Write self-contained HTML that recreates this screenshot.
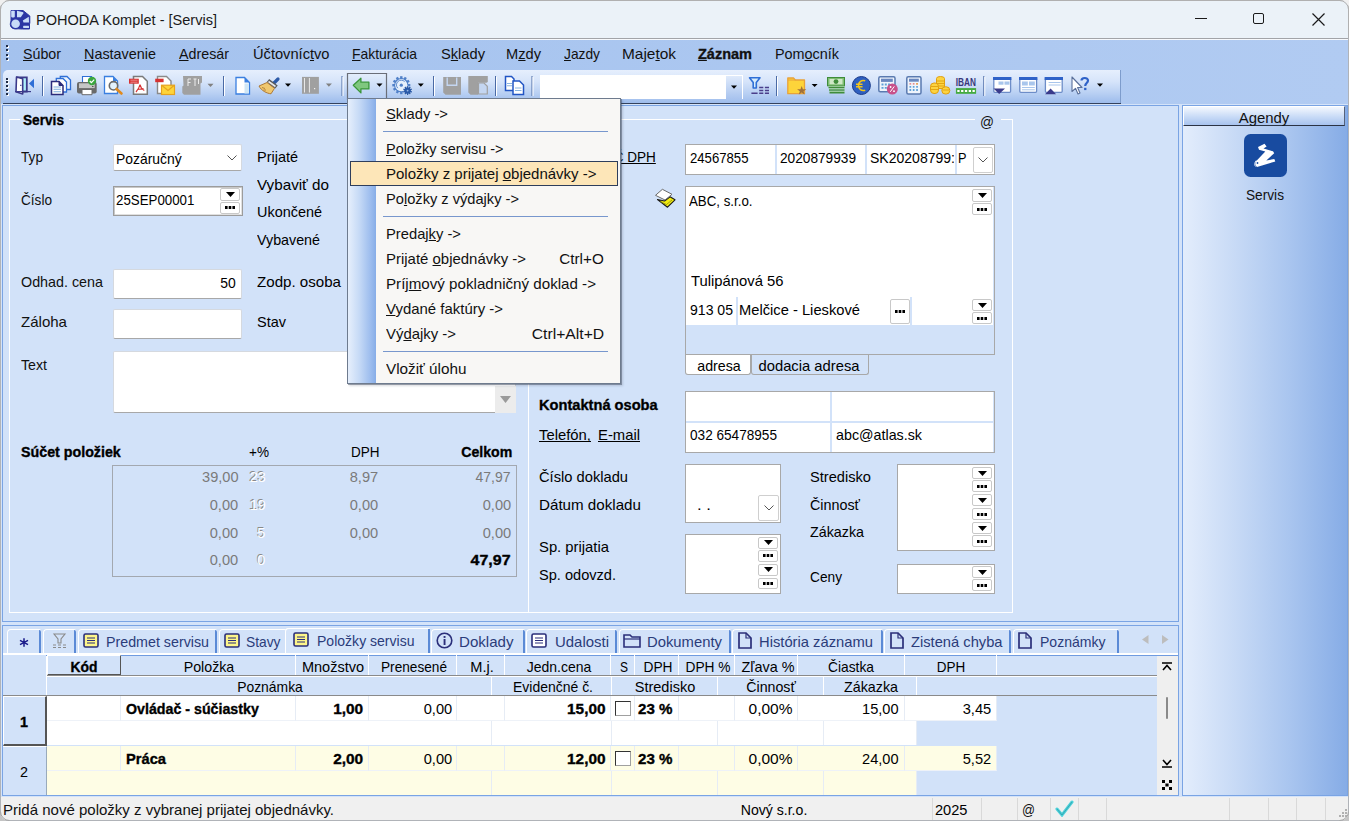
<!DOCTYPE html>
<html><head><meta charset="utf-8"><title>POHODA Komplet - [Servis]</title>
<style>
html,body{margin:0;padding:0;}
body{width:1349px;height:821px;position:relative;overflow:hidden;font-family:"Liberation Sans", sans-serif;background:#b4ccf1;}
svg{display:block;}
u{text-decoration:underline;text-decoration-thickness:1px;text-underline-offset:0.5px;text-decoration-skip-ink:none;}
#t1{transform:scaleX(0.9694);transform-origin:left center;}
#t2{transform:scaleX(0.9489);transform-origin:left center;}
#t3{transform:scaleX(0.9592);transform-origin:left center;}
#t4{transform:scaleX(0.9515);transform-origin:left center;}
#t5{transform:scaleX(0.9761);transform-origin:left center;}
#t6{transform:scaleX(0.9280);transform-origin:left center;}
#t7{transform:scaleX(0.9768);transform-origin:left center;}
#t8{transform:scaleX(0.9765);transform-origin:left center;}
#t9{transform:scaleX(0.9187);transform-origin:left center;}
#t10{transform:scaleX(1.0280);transform-origin:left center;}
#t11{transform:scaleX(0.9595);transform-origin:left center;}
#t12{transform:scaleX(0.9667);transform-origin:left center;}
#t13{transform:translateX(-50%) scaleX(0.9926);transform-origin:center center;}
#t14{transform:translateX(-50%) scaleX(0.9115);transform-origin:center center;}
#t15{transform:scaleX(0.9102);transform-origin:left center;}
#t16{transform:scaleX(0.9190);transform-origin:left center;}
#t17{transform:scaleX(0.9096);transform-origin:left center;}
#t18{transform:scaleX(0.9068);transform-origin:left center;}
#t19{transform:scaleX(0.9545);transform-origin:left center;}
#t20{transform:scaleX(1.0027);transform-origin:left center;}
#t21{transform:scaleX(0.9449);transform-origin:left center;}
#t22{transform:scaleX(0.9256);transform-origin:left center;}
#t23{transform:scaleX(0.8867);transform-origin:left center;}
#t24{transform:scaleX(0.9288);transform-origin:right center;}
#t25{transform:scaleX(0.9640);transform-origin:left center;}
#t26{transform:scaleX(1.0148);transform-origin:left center;}
#t27{transform:scaleX(0.9623);transform-origin:left center;}
#t28{transform:scaleX(0.9521);transform-origin:left center;}
#t29{transform:scaleX(1.0071);transform-origin:left center;}
#t30{transform:scaleX(0.9662);transform-origin:left center;}
#t31{transform:scaleX(0.9502);transform-origin:left center;}
#t32{transform:scaleX(0.9046);transform-origin:left center;}
#t33{transform:scaleX(0.8999);transform-origin:left center;}
#t34{transform:scaleX(0.9412);transform-origin:right center;}
#t35{transform:scaleX(0.9721);transform-origin:right center;}
#t36{transform:scaleX(0.9588);transform-origin:right center;}
#t37{transform:scaleX(0.9759);transform-origin:right center;}
#t38{transform:scaleX(0.9322);transform-origin:right center;}
#t39{transform:scaleX(0.9759);transform-origin:right center;}
#t40{transform:scaleX(0.9588);transform-origin:right center;}
#t41{transform:scaleX(0.9759);transform-origin:right center;}
#t42{transform:scaleX(0.9759);transform-origin:right center;}
#t43{transform:scaleX(0.9759);transform-origin:right center;}
#t44{transform:scaleX(0.9588);transform-origin:right center;}
#t45{transform:scaleX(0.9759);transform-origin:right center;}
#t46{transform:scaleX(0.9759);transform-origin:right center;}
#t47{transform:scaleX(0.9759);transform-origin:right center;}
#t48{transform:scaleX(0.9588);transform-origin:right center;}
#t49{transform:scaleX(1.0653);transform-origin:right center;}
#t50{transform:scaleX(0.9028);transform-origin:right center;}
#t51{transform:scaleX(0.8764);transform-origin:left center;}
#t52{transform:scaleX(0.9109);transform-origin:left center;}
#t53{transform:scaleX(0.9349);transform-origin:left center;}
#t54{transform:scaleX(0.8487);transform-origin:left center;}
#t55{transform:scaleX(0.8856);transform-origin:left center;}
#t56{transform:scaleX(0.9873);transform-origin:left center;}
#t57{transform:scaleX(0.9370);transform-origin:left center;}
#t58{transform:scaleX(0.9806);transform-origin:left center;}
#t59{transform:translateX(-50%) scaleX(0.9482);transform-origin:center center;}
#t60{transform:translateX(-50%) scaleX(0.9846);transform-origin:center center;}
#t61{transform:scaleX(0.9754);transform-origin:left center;}
#t62{transform:scaleX(0.9896);transform-origin:left center;}
#t63{transform:scaleX(0.9879);transform-origin:left center;}
#t64{transform:scaleX(0.9068);transform-origin:left center;}
#t65{transform:scaleX(0.9527);transform-origin:left center;}
#t66{transform:scaleX(0.9792);transform-origin:left center;}
#t67{transform:scaleX(1.0108);transform-origin:left center;}
#t68{transform:scaleX(0.9877);transform-origin:left center;}
#t69{transform:scaleX(0.9720);transform-origin:left center;}
#t70{transform:scaleX(1.1186);transform-origin:left center;}
#t71{transform:scaleX(0.9755);transform-origin:left center;}
#t72{transform:scaleX(0.9555);transform-origin:left center;}
#t73{transform:scaleX(0.9523);transform-origin:left center;}
#t74{transform:scaleX(0.9135);transform-origin:left center;}
#t75{transform:scaleX(0.9504);transform-origin:left center;}
#t76{transform:scaleX(0.9196);transform-origin:left center;}
#t77{transform:scaleX(0.9357);transform-origin:left center;}
#t78{transform:scaleX(1.0055);transform-origin:left center;}
#t79{transform:scaleX(0.9963);transform-origin:left center;}
#t80{transform:scaleX(0.9885);transform-origin:left center;}
#t81{transform:scaleX(0.9837);transform-origin:left center;}
#t82{transform:scaleX(0.9798);transform-origin:left center;}
#t83{transform:scaleX(0.9353);transform-origin:left center;}
#t84{transform:translateX(-50%) scaleX(0.9255);transform-origin:center center;}
#t85{transform:translateX(-50%) scaleX(0.9461);transform-origin:center center;}
#t86{transform:translateX(-50%) scaleX(0.9688);transform-origin:center center;}
#t87{transform:translateX(-50%) scaleX(0.9096);transform-origin:center center;}
#t88{transform:translateX(-50%) scaleX(0.9722);transform-origin:center center;}
#t89{transform:translateX(-50%) scaleX(0.9316);transform-origin:center center;}
#t90{transform:translateX(-50%) scaleX(0.7988);transform-origin:center center;}
#t91{transform:translateX(-50%) scaleX(0.9156);transform-origin:center center;}
#t92{transform:translateX(-50%) scaleX(0.9149);transform-origin:center center;}
#t93{transform:translateX(-50%) scaleX(0.9595);transform-origin:center center;}
#t94{transform:translateX(-50%) scaleX(0.9194);transform-origin:center center;}
#t95{transform:translateX(-50%) scaleX(0.8999);transform-origin:center center;}
#t96{transform:translateX(-50%) scaleX(0.9256);transform-origin:center center;}
#t97{transform:translateX(-50%) scaleX(0.9314);transform-origin:center center;}
#t98{transform:translateX(-50%) scaleX(0.9675);transform-origin:center center;}
#t99{transform:translateX(-50%) scaleX(0.9460);transform-origin:center center;}
#t100{transform:translateX(-50%) scaleX(0.9523);transform-origin:center center;}
#t101{transform:scaleX(0.9480);transform-origin:left center;}
#t102{transform:scaleX(1.0273);transform-origin:right center;}
#t103{transform:scaleX(0.9759);transform-origin:right center;}
#t104{transform:scaleX(1.0254);transform-origin:right center;}
#t105{transform:scaleX(1.0087);transform-origin:left center;}
#t106{transform:scaleX(1.0342);transform-origin:right center;}
#t107{transform:scaleX(0.9721);transform-origin:right center;}
#t108{transform:scaleX(0.9759);transform-origin:right center;}
#t109{transform:scaleX(0.9786);transform-origin:left center;}
#t110{transform:scaleX(1.0273);transform-origin:right center;}
#t111{transform:scaleX(0.9759);transform-origin:right center;}
#t112{transform:scaleX(1.0254);transform-origin:right center;}
#t113{transform:scaleX(1.0087);transform-origin:left center;}
#t114{transform:scaleX(1.0342);transform-origin:right center;}
#t115{transform:scaleX(0.9721);transform-origin:right center;}
#t116{transform:scaleX(0.9759);transform-origin:right center;}
#t117{transform:translateX(-50%) scaleX(0.9588);transform-origin:center center;}
#t118{transform:translateX(-50%) scaleX(0.9588);transform-origin:center center;}
#t119{transform:scaleX(1.0008);transform-origin:left center;}
#t120{transform:translateX(-50%) scaleX(0.9399);transform-origin:center center;}
#t121{transform:scaleX(0.9738);transform-origin:left center;}
#t122{transform:scaleX(0.8533);transform-origin:left center;}
#t123{transform:scaleX(0.9846);transform-origin:left center;}
#t124{transform:scaleX(0.9620);transform-origin:left center;}
#t125{transform:scaleX(0.9999);transform-origin:left center;}
#t126{transform:scaleX(0.9756);transform-origin:left center;}
#t127{transform:scaleX(0.9830);transform-origin:left center;}
#t128{transform:scaleX(0.9964);transform-origin:left center;}
#t129{transform:scaleX(1.0095);transform-origin:left center;}
#t130{transform:scaleX(0.9963);transform-origin:left center;}
#t131{transform:scaleX(0.9933);transform-origin:left center;}
#t132{transform:scaleX(1.0188);transform-origin:left center;}
#t133{transform:scaleX(1.0168);transform-origin:right center;}
#t134{transform:scaleX(1.0479);transform-origin:right center;}
</style></head><body>
<div style="position:absolute;left:0px;top:0px;width:1349px;height:38px;background:#ebf2f8;"></div>
<div style="position:absolute;left:0px;top:0px;width:1349px;height:1px;background:#b0b0b0;"></div>
<div style="position:absolute;left:0px;top:0px;width:1px;height:40px;background:#b0b0b0;"></div>
<div style="position:absolute;left:1348px;top:0px;width:1px;height:40px;background:#b0b0b0;"></div>
<svg style="position:absolute;left:0;top:0" width="10" height="10" viewBox="0 0 10 10"><path d="M0 0H9A9 9 0 0 0 0 9Z" fill="#f0f0f0"/><path d="M0.5 9.5A9 9 0 0 1 9.5 0.5" stroke="#b0b0b0" stroke-width="1" fill="none"/></svg>
<svg style="position:absolute;left:1339px;top:0" width="10" height="10" viewBox="0 0 10 10"><path d="M10 0H1A9 9 0 0 1 10 9Z" fill="#f0f0f0"/><path d="M0.5 0.5A9 9 0 0 1 9.5 9.5" stroke="#b0b0b0" stroke-width="1" fill="none"/></svg>
<div style="position:absolute;left:0px;top:38px;width:1349px;height:1px;background:#a2a4a8;"></div>
<div style="position:absolute;left:0px;top:39px;width:1349px;height:1px;background:#f7f9fc;"></div>
<div id="t1" style="position:absolute;left:36.0px;top:11px;font-size:15px;line-height:17px;-webkit-text-stroke:0px #1a1a1a;color:#1a1a1a;white-space:nowrap;">POHODA Komplet - [Servis]</div>
<svg style="position:absolute;left:0;top:0" width="40" height="38" viewBox="0 0 40 38"><path d="M11 10.5H23L29.8 16V23.5H29.5V29H22.5L18 28.8C16 29.2 13 29 11.5 27.5C10 26 10 23 11 21Z" fill="#2a36a4" stroke="#2a36a4" stroke-width="1" stroke-linejoin="round"/><rect x="11.2" y="10.8" width="3.6" height="6.6" rx="0.8" fill="#c8dcf8"/><path d="M17 10.8L23.3 12.2L23.3 13.5L20.8 17.3H17Z" fill="#c8dcf8"/><path d="M28.8 16.8L29 22.6H23.5L22.8 20.5Z" fill="#c8dcf8"/><circle cx="15.6" cy="23.8" r="4.3" fill="#c8dcf8"/><rect x="23.2" y="25.8" width="5.8" height="2.3" rx="0.5" fill="#c8dcf8"/></svg>
<div style="position:absolute;left:1195px;top:18px;width:12px;height:1px;background:#1a1a1a;"></div>
<div style="position:absolute;left:1253px;top:13px;width:11px;height:11px;border:1.2px solid #1a1a1a;border-radius:2px;box-sizing:border-box;"></div>
<svg style="position:absolute;left:1312px;top:13px" width="13" height="13"><path d="M0.5 0.5L12.5 12.5M12.5 0.5L0.5 12.5" stroke="#1a1a1a" stroke-width="1.2"/></svg>
<div style="position:absolute;left:0px;top:40px;width:1349px;height:30px;background:linear-gradient(90deg,#a4c2ee,#b1cbf2);"></div>
<div style="position:absolute;left:6px;top:45px;width:2px;height:2px;background:#1e2a44;box-shadow:1px 1px 0 #fff;"></div>
<div style="position:absolute;left:6px;top:49px;width:2px;height:2px;background:#1e2a44;box-shadow:1px 1px 0 #fff;"></div>
<div style="position:absolute;left:6px;top:54px;width:2px;height:2px;background:#1e2a44;box-shadow:1px 1px 0 #fff;"></div>
<div style="position:absolute;left:6px;top:58px;width:2px;height:2px;background:#1e2a44;box-shadow:1px 1px 0 #fff;"></div>
<div id="t2" style="position:absolute;left:23.0px;top:45px;font-size:15px;line-height:17px;-webkit-text-stroke:0px #111;color:#111;white-space:nowrap;"><u>S</u>úbor</div>
<div id="t3" style="position:absolute;left:84.0px;top:45px;font-size:15px;line-height:17px;-webkit-text-stroke:0px #111;color:#111;white-space:nowrap;"><u>N</u>astavenie</div>
<div id="t4" style="position:absolute;left:179.0px;top:45px;font-size:15px;line-height:17px;-webkit-text-stroke:0px #111;color:#111;white-space:nowrap;"><u>A</u>dresár</div>
<div id="t5" style="position:absolute;left:252.5px;top:45px;font-size:15px;line-height:17px;-webkit-text-stroke:0px #111;color:#111;white-space:nowrap;">Účtovníc<u>t</u>vo</div>
<div id="t6" style="position:absolute;left:352.0px;top:45px;font-size:15px;line-height:17px;-webkit-text-stroke:0px #111;color:#111;white-space:nowrap;"><u>F</u>akturácia</div>
<div id="t7" style="position:absolute;left:441.0px;top:45px;font-size:15px;line-height:17px;-webkit-text-stroke:0px #111;color:#111;white-space:nowrap;">S<u>k</u>lady</div>
<div id="t8" style="position:absolute;left:506.0px;top:45px;font-size:15px;line-height:17px;-webkit-text-stroke:0px #111;color:#111;white-space:nowrap;">M<u>z</u>dy</div>
<div id="t9" style="position:absolute;left:564.0px;top:45px;font-size:15px;line-height:17px;-webkit-text-stroke:0px #111;color:#111;white-space:nowrap;"><u>J</u>azdy</div>
<div id="t10" style="position:absolute;left:622.0px;top:45px;font-size:15px;line-height:17px;-webkit-text-stroke:0px #111;color:#111;white-space:nowrap;">Maje<u>t</u>ok</div>
<div id="t11" style="position:absolute;left:775.0px;top:45px;font-size:15px;line-height:17px;-webkit-text-stroke:0px #111;color:#111;white-space:nowrap;">Pom<u>o</u>cník</div>
<div id="t12" style="position:absolute;left:698.0px;top:45px;font-size:15px;line-height:17px;font-weight:bold;-webkit-text-stroke:0.35px #111;color:#111;white-space:nowrap;"><u>Z</u>áznam</div>
<div style="position:absolute;left:0px;top:70px;width:1349px;height:34px;background:linear-gradient(90deg,#a4c2ee,#b1cbf2);"></div>
<div style="position:absolute;left:3px;top:70px;width:1118px;height:33px;background:linear-gradient(#e6effd 0%,#d6e4fa 35%,#b9d0f3 70%,#9dbcec 100%);border-top-left-radius:5px;border-right:1px solid #7d9ccc;box-sizing:border-box;"></div>
<div style="position:absolute;left:3px;top:103px;width:1118px;height:1px;background:#33415c;"></div>
<div style="position:absolute;left:6px;top:78px;width:2px;height:2px;background:#1e2a44;box-shadow:1px 1px 0 #fff;"></div>
<div style="position:absolute;left:6px;top:81px;width:2px;height:2px;background:#1e2a44;box-shadow:1px 1px 0 #fff;"></div>
<div style="position:absolute;left:6px;top:85px;width:2px;height:2px;background:#1e2a44;box-shadow:1px 1px 0 #fff;"></div>
<div style="position:absolute;left:6px;top:89px;width:2px;height:2px;background:#1e2a44;box-shadow:1px 1px 0 #fff;"></div>
<div style="position:absolute;left:6px;top:93px;width:2px;height:2px;background:#1e2a44;box-shadow:1px 1px 0 #fff;"></div>
<svg style="position:absolute;left:0;top:0" width="1349" height="110" viewBox="0 0 1349 110"><defs><linearGradient id="pressg" x1="0" y1="0" x2="0" y2="1"><stop offset="0" stop-color="#e4eefc"/><stop offset="1" stop-color="#b3ccf2"/></linearGradient></defs><path d="M17 77.3H26.8V91.5H17Z" fill="#aef0fb" stroke="#3b3a8a" stroke-width="1.8"/><path d="M16.5 77L22.7 78.8V94L16 91.7Z" fill="#fff" stroke="#3b3a8a" stroke-width="1.6" stroke-linejoin="round"/><path d="M15 91.6H31" stroke="#3b3a8a" stroke-width="1.2"/><path d="M20 85.3H21.5" stroke="#3b3a8a" stroke-width="1"/><path d="M34 78.7V88.3L29 83.6Z" fill="#2f6fd6"/><path d="M42.5 76V96" stroke="#4a6aa5" stroke-width="1"/><path d="M43.5 77V96" stroke="#fff" stroke-width="1"/><path d="M60.3 76.5H67L70.5 80V89.5H60.3Z" fill="#eaf3fd" stroke="#2f6fd6" stroke-width="1.3"/><path d="M56.3 78.5H63L66.5 82V92H56.3Z" fill="#fff" stroke="#2f6fd6" stroke-width="1.3"/><path d="M51.5 81.5H59L63 85.5V94.5H51.5Z" fill="#fff" stroke="#2c2c7a" stroke-width="1.5"/><path d="M59 81.5V85.5H63" fill="#2c2c7a" stroke="#2c2c7a" stroke-width="1"/><path d="M53.5 87H61M53.5 89.3H61M53.5 91.7H61" stroke="#7eaedc" stroke-width="1.1"/><path d="M82.5 76.5H91.5V83H82.5Z" fill="#fff" stroke="#2f6fd6" stroke-width="1.1"/><rect x="77" y="82" width="19.7" height="11.5" rx="2" fill="#6a6a6a"/><rect x="79" y="83.3" width="15.7" height="4.8" fill="#c6c6c6"/><path d="M82 89.5H92V94.7H82Z" fill="#fff" stroke="#6a6a6a" stroke-width="1"/><rect x="92" y="86" width="1.5" height="1" fill="#555"/><circle cx="92" cy="81" r="4.2" fill="#3aa63f"/><path d="M89.8 81L91.4 82.6L94.2 79.6" stroke="#fff" stroke-width="1.2" fill="none"/><path d="M104.5 76.5H113L117.5 81V93.5H104.5Z" fill="#fff" stroke="#3a7fe0" stroke-width="1.3"/><path d="M113 76.5V81H117.5" fill="#3a7fe0"/><circle cx="113.5" cy="85.8" r="4.2" fill="#e2f1fb" stroke="#6a6a6a" stroke-width="1.6"/><path d="M116.5 89L121.5 93.5" stroke="#e08a1e" stroke-width="2.6" stroke-linecap="round"/><path d="M133.5 76.5H142.5L147.3 81.3V94.3H133.5Z" fill="#fff" stroke="#7a7a7a" stroke-width="1.5"/><rect x="129" y="78.7" width="9.8" height="5" fill="#d63232"/><path d="M130.5 80.2H137.5M130.5 82.2H137.5" stroke="#f4b0b0" stroke-width="0.7"/><path d="M136 92C138.5 89 139.5 87 140 84.5C140.5 87 141.5 89 144.3 90.5M137.8 89.5L143.5 88.5" stroke="#d63232" stroke-width="1.2" fill="none"/><path d="M157.5 76.5H166.5L171 81V93.5H157.5Z" fill="#fff" stroke="#8a8a8a" stroke-width="1.4"/><rect x="155.2" y="78.7" width="8.4" height="3.5" fill="#d63232"/><rect x="161.5" y="85.2" width="13" height="9.3" fill="#fdd43a" stroke="#e6a21e" stroke-width="1.2"/><path d="M162 85.5L168 90.5L174 85.5" stroke="#e6a21e" stroke-width="1.1" fill="none"/><path d="M183 76H202V82.5L200.5 83.5V94.7H184L182.3 93V86.5L183.5 85.5Z" fill="#a0a0a0"/><path d="M188 79V86M188 79H191M188 82.5H190.5M193.5 79H196.5M195 79V86M198.5 79V84" stroke="#ececec" stroke-width="1"/><path d="M207.5 83.8H213.5L210.5 87.0Z" fill="#808080"/><path d="M223.5 76V96" stroke="#4a6aa5" stroke-width="1"/><path d="M224.5 77V96" stroke="#fff" stroke-width="1"/><path d="M236 77.5H244.5L249.5 82.5V94H236Z" fill="#fff" stroke="#3a7fe0" stroke-width="1.3"/><path d="M244.5 77.5V82.5H249.5Z" fill="#3a7fe0"/><rect x="244.5" y="83.5" width="4.3" height="10" fill="#cfe6f5"/><path d="M278 79L272 85" stroke="#2c5aa8" stroke-width="3.2" stroke-linecap="round"/><path d="M268 80.5L276.5 87" stroke="#5a5a5a" stroke-width="4"/><path d="M268.5 81.5L275.5 86.5" stroke="#e8e8e8" stroke-width="1.6"/><path d="M267 82.5L274.5 88.3L271 93.8C267 93.5 261 90.5 259 86Z" fill="#f0c870" stroke="#a8712a" stroke-width="0.9"/><path d="M262 87.5L265 88.5M263.5 90L266 90" stroke="#a8712a" stroke-width="0.8"/><path d="M285 83.6H291L288 86.8Z" fill="#000"/><rect x="302" y="76.9" width="16.9" height="16.9" fill="#a0a0a0"/><path d="M304.5 78V92.5M309.4 78V92.5" stroke="#f0f0f0" stroke-width="0.9"/><rect x="314" y="88" width="1.2" height="1.2" fill="#f0f0f0"/><path d="M325.9 83.6H331.9L328.9 86.8Z" fill="#808080"/><path d="M342 76V96" stroke="#4a6aa5" stroke-width="1"/><path d="M343 77V96" stroke="#fff" stroke-width="1"/><path d="M347.5 100V73.5H386.5V98" fill="url(#pressg)" stroke="#6a6e78" stroke-width="1.2"/><path d="M353.3 85.3L360.9 78.2V82.2H368.9V88.9H360.9V92.9Z" fill="#7fc77f" stroke="#3a963a" stroke-width="1.3" stroke-linejoin="round"/><path d="M376.5 83.6H382.5L379.5 86.8Z" fill="#000"/><circle cx="401.3" cy="85.2" r="7.2" fill="#5080c8"/><rect x="400.10" y="76.20" width="2.4" height="3.40" fill="#5080c8" transform="rotate(0.0 401.3 85.2)"/><rect x="400.10" y="76.20" width="2.4" height="3.40" fill="#5080c8" transform="rotate(30.0 401.3 85.2)"/><rect x="400.10" y="76.20" width="2.4" height="3.40" fill="#5080c8" transform="rotate(60.0 401.3 85.2)"/><rect x="400.10" y="76.20" width="2.4" height="3.40" fill="#5080c8" transform="rotate(90.0 401.3 85.2)"/><rect x="400.10" y="76.20" width="2.4" height="3.40" fill="#5080c8" transform="rotate(120.0 401.3 85.2)"/><rect x="400.10" y="76.20" width="2.4" height="3.40" fill="#5080c8" transform="rotate(150.0 401.3 85.2)"/><rect x="400.10" y="76.20" width="2.4" height="3.40" fill="#5080c8" transform="rotate(180.0 401.3 85.2)"/><rect x="400.10" y="76.20" width="2.4" height="3.40" fill="#5080c8" transform="rotate(210.0 401.3 85.2)"/><rect x="400.10" y="76.20" width="2.4" height="3.40" fill="#5080c8" transform="rotate(240.0 401.3 85.2)"/><rect x="400.10" y="76.20" width="2.4" height="3.40" fill="#5080c8" transform="rotate(270.0 401.3 85.2)"/><rect x="400.10" y="76.20" width="2.4" height="3.40" fill="#5080c8" transform="rotate(300.0 401.3 85.2)"/><rect x="400.10" y="76.20" width="2.4" height="3.40" fill="#5080c8" transform="rotate(330.0 401.3 85.2)"/><circle cx="401.3" cy="85.2" r="6.1" fill="#e6f0fc"/><path d="M397.8 88.2A4.6 4.6 0 0 1 404.6 81.6" stroke="#5080c8" stroke-width="0.9" fill="none"/><circle cx="401.3" cy="85.2" r="1.6" fill="#5080c8"/><circle cx="407.6" cy="90.6" r="4.3" fill="#e6f0fc"/><circle cx="407.6" cy="90.6" r="3.2" fill="#2a5aa8"/><rect x="406.85" y="86.20" width="1.5" height="2.20" fill="#2a5aa8" transform="rotate(0.0 407.6 90.6)"/><rect x="406.85" y="86.20" width="1.5" height="2.20" fill="#2a5aa8" transform="rotate(36.0 407.6 90.6)"/><rect x="406.85" y="86.20" width="1.5" height="2.20" fill="#2a5aa8" transform="rotate(72.0 407.6 90.6)"/><rect x="406.85" y="86.20" width="1.5" height="2.20" fill="#2a5aa8" transform="rotate(108.0 407.6 90.6)"/><rect x="406.85" y="86.20" width="1.5" height="2.20" fill="#2a5aa8" transform="rotate(144.0 407.6 90.6)"/><rect x="406.85" y="86.20" width="1.5" height="2.20" fill="#2a5aa8" transform="rotate(180.0 407.6 90.6)"/><rect x="406.85" y="86.20" width="1.5" height="2.20" fill="#2a5aa8" transform="rotate(216.0 407.6 90.6)"/><rect x="406.85" y="86.20" width="1.5" height="2.20" fill="#2a5aa8" transform="rotate(252.0 407.6 90.6)"/><rect x="406.85" y="86.20" width="1.5" height="2.20" fill="#2a5aa8" transform="rotate(288.0 407.6 90.6)"/><rect x="406.85" y="86.20" width="1.5" height="2.20" fill="#2a5aa8" transform="rotate(324.0 407.6 90.6)"/><circle cx="407.6" cy="90.6" r="0.9" fill="#9ab8e8"/><path d="M417.8 83.6H423.8L420.8 86.8Z" fill="#000"/><path d="M433.5 76V96" stroke="#4a6aa5" stroke-width="1"/><path d="M434.5 77V96" stroke="#fff" stroke-width="1"/><path d="M443.2 76.9H461V94.7H445.5L443.2 92.4Z" fill="#a0a0a0"/><path d="M447.2 77.5V85.3H456.7V77.5" stroke="#c4d6f1" stroke-width="1.4" fill="none"/><path d="M468.3 76H487.8V82L486.5 82.7H478V94.7H470.5L468.3 92.5Z" fill="#a0a0a0"/><path d="M478.5 83H484L487.3 86.3V94H478.5Z" fill="#c4d6f1" stroke="#a0a0a0" stroke-width="1.2"/><path d="M495.5 76V96" stroke="#4a6aa5" stroke-width="1"/><path d="M496.5 77V96" stroke="#fff" stroke-width="1"/><path d="M505.5 76.5H511.5L514 79V90.5H505.5Z" fill="#fff" stroke="#2255c4" stroke-width="1.5"/><path d="M513 81H519.5L523.5 85V94.5H513Z" fill="#fff" stroke="#2255c4" stroke-width="1.5"/><path d="M507 83.5H512M507 85.7H512M515 88H521.5M515 90.5H521.5" stroke="#8ab4e0" stroke-width="1.1"/><path d="M532 76V96" stroke="#4a6aa5" stroke-width="1"/><path d="M533 77V96" stroke="#fff" stroke-width="1"/><path d="M749.5 77.8H760L756.3 82.5V88H753.2V82.5Z" fill="#d6ecfc" stroke="#2f6fd6" stroke-width="1.6" stroke-linejoin="round"/><path d="M759.2 87.5H763.3M764.9 87.5H769M759.2 90.5H763.3M764.9 90.5H769M751.4 93.2H757.6M759.2 93.2H763.3M764.9 93.2H769" stroke="#4a3e8a" stroke-width="1.6"/><path d="M776.5 76V96" stroke="#4a6aa5" stroke-width="1"/><path d="M777.5 77V96" stroke="#fff" stroke-width="1"/><path d="M787.8 78H793.5L795.3 80H804.5V93.7H787.8Z" fill="#fdd43a" stroke="#e8a23a" stroke-width="1.3" stroke-linejoin="round"/><path d="M787.8 80H795.3" stroke="#e8a23a" stroke-width="1"/><path d="M801.7 86L802.9 89.2H806.3L803.6 91.2L804.6 94.5L801.7 92.5L798.8 94.5L799.8 91.2L797.1 89.2H800.5Z" fill="#a0703a"/><path d="M811.6 83.9H817.6L814.6 87.10000000000001Z" fill="#000"/><rect x="827.5" y="77.5" width="17" height="8.3" fill="#7dbd72" stroke="#3f8c3a" stroke-width="1"/><rect x="829.5" y="79" width="13" height="5.3" fill="#cfe8c6"/><ellipse cx="836" cy="81.6" rx="2.4" ry="2.4" fill="#3f8c3a"/><path d="M828.5 87.5H844.5M829 90H844.5M829.5 92.7H844.5" stroke="#3f8c3a" stroke-width="1.7"/><path d="M828.5 86.3H844.5M829 88.8H844.5M829.5 91.4H844.5" stroke="#9ccf90" stroke-width="0.8"/><circle cx="861.4" cy="85.5" r="9" fill="#2e5fc0" stroke="#1a3a8a" stroke-width="1"/><path d="M865.2 80.8C861.5 79.5 858.5 82 858.5 85.5C858.5 89 861.5 91.5 865.2 90.2M856 84.3H862.5M856 86.8H862.5" stroke="#f5c518" stroke-width="1.6" fill="none"/><rect x="878.8" y="76.7" width="16.2" height="15" rx="1.5" fill="#eef4fc" stroke="#5a7ab0" stroke-width="1.5"/><rect x="881" y="78.7" width="11.8" height="3.2" fill="#6a88c0"/><path d="M881.5 84.5H883.5M884.8 84.5H886.8M888 84.5H890M881.5 87.8H883.5M884.8 87.8H886.8" stroke="#5fa0d8" stroke-width="1.8"/><circle cx="892.3" cy="89.1" r="5.5" fill="#c8508a"/><path d="M890.3 91.8L894.3 86.4" stroke="#fff" stroke-width="1"/><circle cx="890.6" cy="87" r="0.9" fill="#fff"/><circle cx="894" cy="91.2" r="0.9" fill="#fff"/><rect x="906.8" y="76.7" width="14.2" height="17.2" rx="1.5" fill="#eef4fc" stroke="#5a7ab0" stroke-width="1.5"/><rect x="909" y="78.7" width="9.8" height="3" fill="#6a88c0"/><path d="M909.5 83.9H911.2M912.8 83.9H914.5M916.2 83.9H917.9" stroke="#e04848" stroke-width="1"/><path d="M916.2 83.9H917.9" stroke="#e8b020" stroke-width="1"/><path d="M909.5 86.8H911.2M912.8 86.8H914.5M916.2 86.8H917.9M909.5 90H911.2M912.8 90H914.5M916.2 90H917.9" stroke="#5fa0d8" stroke-width="1.8"/><path d="M936.5 78.5A4 2 0 0 1 944.5 78.5V88.5H936.5Z" fill="#fcd340" stroke="#e0a010" stroke-width="1"/><path d="M936.5 81H944.5M936.5 83.5H944.5M936.5 86H944.5" stroke="#e0a010" stroke-width="0.9"/><rect x="930.5" y="83" width="8" height="10.5" rx="3.5" fill="#fcd340" stroke="#e0a010" stroke-width="1"/><path d="M931 86.5H938M931 89.5H938" stroke="#e0a010" stroke-width="0.9"/><rect x="941.8" y="86.8" width="8" height="7.2" rx="3.5" fill="#fcd340" stroke="#e0a010" stroke-width="1"/><path d="M942.5 90H949" stroke="#e0a010" stroke-width="0.9"/><text x="955.8" y="85.6" font-family="Liberation Sans" font-weight="bold" font-size="11.3" fill="#38387a" textLength="20.3" lengthAdjust="spacingAndGlyphs">IBAN</text><rect x="955.9" y="88.1" width="20.2" height="5.7" fill="#44aa40"/><path d="M957.3 91H975" stroke="#fff" stroke-width="2.2" stroke-dasharray="2.3 1.5"/><path d="M983.8 76V96" stroke="#4a6aa5" stroke-width="1"/><path d="M984.8 77V96" stroke="#fff" stroke-width="1"/><rect x="993.8" y="77.8" width="16.8" height="14.5" rx="1" fill="#fff" stroke="#6d8dc8" stroke-width="1.3"/><rect x="993" y="77" width="18.4" height="3" fill="#2f62c8"/><rect x="998.5" y="81.5" width="5" height="3.2" fill="#a9c6ec"/><rect x="1004.5" y="81.5" width="5" height="3.2" fill="#a9c6ec"/><path d="M993.5 88.5H1005L999.2 94Z" fill="#3a3a8a"/><rect x="1019.8" y="77.8" width="16.8" height="14.5" rx="1" fill="#fff" stroke="#6d8dc8" stroke-width="1.3"/><rect x="1019" y="77" width="18.4" height="3" fill="#2f62c8"/><rect x="1022" y="81.5" width="5.8" height="4" fill="#a9c6ec"/><rect x="1029" y="81.5" width="5.8" height="4" fill="#a9c6ec"/><path d="M1022 87.5H1034.8M1022 89.8H1034.8" stroke="#a9c6ec" stroke-width="1"/><rect x="1045.3999999999999" y="77.8" width="16.8" height="14.5" rx="1" fill="#fff" stroke="#6d8dc8" stroke-width="1.3"/><rect x="1044.6" y="77" width="18.4" height="3" fill="#2f62c8"/><path d="M1048.6 82.5H1060.6M1048.6 85H1060.6" stroke="#a9c6ec" stroke-width="1"/><path d="M1045.1 94.3H1056.1L1050.6 88.5Z" fill="#3a3a8a"/><path d="M1072 77V91.5L1075.5 88.3L1078 94L1080 93L1077.6 87.5H1082Z" fill="#fff" stroke="#5a6f9a" stroke-width="1.1" stroke-linejoin="round"/><path d="M1081.5 80.5C1081.5 77.3 1088 77 1088 80.5C1088 83 1085.2 83 1085.2 86" stroke="#2f62c8" stroke-width="2.2" fill="none"/><rect x="1084.1" y="87.8" width="2.3" height="2.3" fill="#2f62c8"/><path d="M1097 83.6H1103L1100 86.8Z" fill="#000"/></svg><div style="position:absolute;left:540px;top:75px;width:203px;height:24px;background:#fff;box-sizing:border-box;"></div><div style="position:absolute;left:726px;top:75.5px;width:16px;height:23px;background:linear-gradient(#dfeafb,#a8c3ee);"></div><svg style="position:absolute;left:0;top:0" width="1349" height="110" viewBox="0 0 1349 110"><path d="M731 85.5H737L734 88.7Z" fill="#000"/></svg>
<div style="position:absolute;left:0px;top:104px;width:1349px;height:693px;background:#d4e3f9;"></div>
<div style="position:absolute;left:2px;top:105px;width:1177px;height:517px;background:#d2e2f9;border:1px solid #7aa4e4;box-sizing:border-box;"></div>
<div style="position:absolute;left:1182px;top:105px;width:166px;height:691px;background:linear-gradient(90deg,#e3edfc 0%,#c9dbf6 30%,#a9c5ef 65%,#86ace6 100%);border:1px solid #7aa4e4;box-sizing:border-box;"></div>
<div style="position:absolute;left:1183px;top:106px;width:162px;height:20px;background:linear-gradient(#f4f8fe,#c4d8f6 60%,#a8c3ee);border:1px solid #fff;border-bottom:1.5px solid #2b3344;border-right:1px solid #56627a;box-sizing:border-box;"></div>
<div id="t13" style="position:absolute;left:1264px;top:109px;font-size:15px;line-height:17px;-webkit-text-stroke:0px #111;color:#111;white-space:nowrap;">Agendy</div>
<svg style="position:absolute;left:1244.3px;top:134px;" width="43" height="43" viewBox="0 0 43 43"><rect x="0" y="0" width="43" height="43" rx="6.5" fill="#184ba0"/><path d="M14 13L20.5 9.8L22.6 12.6L19.5 14.6L29 17.2L30.2 19.3L22.3 26.4L30.3 25L31.3 27.5L13 33C11 31.5 10.8 28.8 12.3 27L21.3 17.5L15 15.8Z" fill="#fff"/><path d="M12.2 26.5C10.5 28.5 10.2 31 11.5 32.5" stroke="#fff" stroke-width="0.8" fill="none"/><circle cx="13.5" cy="29" r="0.9" fill="#184ba0"/></svg>
<div id="t14" style="position:absolute;left:1265px;top:186px;font-size:15px;line-height:17px;-webkit-text-stroke:0px #111;color:#111;white-space:nowrap;">Servis</div>
<div style="position:absolute;left:9px;top:119px;width:11px;height:1px;background:#fff;"></div>
<div style="position:absolute;left:69px;top:119px;width:906px;height:1px;background:#fff;"></div>
<div style="position:absolute;left:1001px;top:119px;width:12px;height:1px;background:#fff;"></div>
<div style="position:absolute;left:9px;top:119px;width:1px;height:494px;background:#fff;"></div>
<div style="position:absolute;left:9px;top:612px;width:1004px;height:1px;background:#fff;"></div>
<div style="position:absolute;left:1012px;top:119px;width:1px;height:494px;background:#fff;"></div>
<div style="position:absolute;left:528px;top:119px;width:1px;height:494px;background:#fff;"></div>
<div id="t15" style="position:absolute;left:23.2px;top:111px;font-size:15px;line-height:17px;font-weight:bold;-webkit-text-stroke:0.35px #000;color:#000;white-space:nowrap;">Servis</div>
<div id="t16" style="position:absolute;left:980.0px;top:113px;font-size:15px;line-height:17px;-webkit-text-stroke:0px #111;color:#111;white-space:nowrap;">@</div>
<div id="t17" style="position:absolute;left:20.5px;top:148px;font-size:15px;line-height:17px;-webkit-text-stroke:0px #111;color:#111;white-space:nowrap;">Typ</div>
<div id="t18" style="position:absolute;left:20.5px;top:191px;font-size:15px;line-height:17px;-webkit-text-stroke:0px #111;color:#111;white-space:nowrap;">Číslo</div>
<div id="t19" style="position:absolute;left:20.5px;top:273px;font-size:15px;line-height:17px;-webkit-text-stroke:0px #111;color:#111;white-space:nowrap;">Odhad. cena</div>
<div id="t20" style="position:absolute;left:20.5px;top:313px;font-size:15px;line-height:17px;-webkit-text-stroke:0px #111;color:#111;white-space:nowrap;">Záloha</div>
<div id="t21" style="position:absolute;left:20.5px;top:356px;font-size:15px;line-height:17px;-webkit-text-stroke:0px #111;color:#111;white-space:nowrap;">Text</div>
<div style="position:absolute;left:113px;top:144px;width:129px;height:27px;background:#fff;border:1px solid #d5d9df;border-bottom:1px solid #a8a8a8;border-radius:2px;box-sizing:border-box;"></div>
<div id="t22" style="position:absolute;left:116.2px;top:150px;font-size:15px;line-height:17px;-webkit-text-stroke:0px #000;color:#000;white-space:nowrap;">Pozáručný</div>
<div style="position:absolute;left:227px;top:155px;width:10px;height:6px;"><svg width="10" height="6"><path d="M0.5 0.5L5 5L9.5 0.5" stroke="#555" stroke-width="1" fill="none"/></svg></div>
<div style="position:absolute;left:113px;top:186px;width:130px;height:30px;background:#fff;border:1px solid #9c9c9c;box-shadow:inset 1px 1px 0 #c8c8c8, inset -1px -1px 0 #e0e0e0;box-sizing:border-box;"></div>
<div id="t23" style="position:absolute;left:116.2px;top:191px;font-size:15px;line-height:17px;-webkit-text-stroke:0px #000;color:#000;white-space:nowrap;">25SEP00001</div>
<div style="position:absolute;left:220px;top:188px;width:20px;height:13px;background:#fff;border:1px solid #c8c8c8;border-radius:2px;box-sizing:border-box;"><svg style="position:absolute;left:4.5px;top:3.0px" width="9" height="5"><path d="M0 0H9L4.5 5Z" fill="#000"/></svg></div>
<div style="position:absolute;left:220px;top:202px;width:20px;height:12px;background:#fff;border:1px solid #c8c8c8;border-radius:2px;box-sizing:border-box;"><svg style="position:absolute;left:4.0px;top:3.25px" width="10" height="3"><path d="M0 0H2.6V3H0ZM3.7 0H6.3V3H3.7ZM7.4 0H10V3H7.4Z" fill="#000"/></svg></div>
<div style="position:absolute;left:113px;top:269px;width:129px;height:30px;background:#fff;border:1px solid #d5d9df;border-bottom:1px solid #a8a8a8;border-radius:2px;box-sizing:border-box;"></div>
<div id="t24" style="position:absolute;right:1113px;top:274px;font-size:15px;line-height:17px;-webkit-text-stroke:0px #000;color:#000;white-space:nowrap;">50</div>
<div style="position:absolute;left:113px;top:309px;width:129px;height:30px;background:#fff;border:1px solid #d5d9df;border-bottom:1px solid #a8a8a8;border-radius:2px;box-sizing:border-box;"></div>
<div style="position:absolute;left:113px;top:351px;width:403px;height:62px;background:#fff;border:1px solid #d5d9df;border-bottom:1px solid #a8a8a8;border-radius:2px;box-sizing:border-box;"></div>
<div style="position:absolute;left:495px;top:386px;width:21px;height:27px;background:#ececec;"><svg style="position:absolute;left:5px;top:10px" width="11" height="7"><path d="M0 0H11L5.5 7Z" fill="#9a9a9a"/></svg></div>
<div id="t25" style="position:absolute;left:256.5px;top:148px;font-size:15px;line-height:17px;-webkit-text-stroke:0px #000;color:#000;white-space:nowrap;">Prijaté</div>
<div id="t26" style="position:absolute;left:256.5px;top:176px;font-size:15px;line-height:17px;-webkit-text-stroke:0px #000;color:#000;white-space:nowrap;">Vybaviť do</div>
<div id="t27" style="position:absolute;left:256.5px;top:203px;font-size:15px;line-height:17px;-webkit-text-stroke:0px #000;color:#000;white-space:nowrap;">Ukončené</div>
<div id="t28" style="position:absolute;left:256.5px;top:231px;font-size:15px;line-height:17px;-webkit-text-stroke:0px #000;color:#000;white-space:nowrap;">Vybavené</div>
<div id="t29" style="position:absolute;left:256.5px;top:273px;font-size:15px;line-height:17px;-webkit-text-stroke:0px #000;color:#000;white-space:nowrap;">Zodp. osoba</div>
<div id="t30" style="position:absolute;left:256.5px;top:313px;font-size:15px;line-height:17px;-webkit-text-stroke:0px #000;color:#000;white-space:nowrap;">Stav</div>
<div id="t31" style="position:absolute;left:20.5px;top:443px;font-size:15px;line-height:17px;font-weight:bold;-webkit-text-stroke:0.35px #000;color:#000;white-space:nowrap;">Súčet položiek</div>
<div id="t32" style="position:absolute;left:248.5px;top:443px;font-size:15px;line-height:17px;-webkit-text-stroke:0px #000;color:#000;white-space:nowrap;">+%</div>
<div id="t33" style="position:absolute;left:350.7px;top:443px;font-size:15px;line-height:17px;-webkit-text-stroke:0px #000;color:#000;white-space:nowrap;">DPH</div>
<div id="t34" style="position:absolute;right:837px;top:443px;font-size:15px;line-height:17px;font-weight:bold;-webkit-text-stroke:0.35px #000;color:#000;white-space:nowrap;">Celkom</div>
<div style="position:absolute;left:112px;top:465px;width:405px;height:112px;border:1px solid #a3a8b0;box-sizing:border-box;"></div>
<div id="t35" style="position:absolute;right:1110.5px;top:468px;font-size:15px;line-height:17px;-webkit-text-stroke:0px #7a7a7a;color:#7a7a7a;white-space:nowrap;">39,00</div>
<div id="t36" style="position:absolute;right:1083.5px;top:468px;font-size:15px;line-height:17px;-webkit-text-stroke:0px #fff;color:#fff;white-space:nowrap;text-shadow:-1px -1px 0 #8a8a8a;">23</div>
<div id="t37" style="position:absolute;right:970.5px;top:468px;font-size:15px;line-height:17px;-webkit-text-stroke:0px #7a7a7a;color:#7a7a7a;white-space:nowrap;">8,97</div>
<div id="t38" style="position:absolute;right:838px;top:468px;font-size:15px;line-height:17px;-webkit-text-stroke:0px #7a7a7a;color:#7a7a7a;white-space:nowrap;">47,97</div>
<div id="t39" style="position:absolute;right:1110.5px;top:496px;font-size:15px;line-height:17px;-webkit-text-stroke:0px #7a7a7a;color:#7a7a7a;white-space:nowrap;">0,00</div>
<div id="t40" style="position:absolute;right:1083.5px;top:496px;font-size:15px;line-height:17px;-webkit-text-stroke:0px #fff;color:#fff;white-space:nowrap;text-shadow:-1px -1px 0 #8a8a8a;">19</div>
<div id="t41" style="position:absolute;right:970.5px;top:496px;font-size:15px;line-height:17px;-webkit-text-stroke:0px #7a7a7a;color:#7a7a7a;white-space:nowrap;">0,00</div>
<div id="t42" style="position:absolute;right:838px;top:496px;font-size:15px;line-height:17px;-webkit-text-stroke:0px #7a7a7a;color:#7a7a7a;white-space:nowrap;">0,00</div>
<div id="t43" style="position:absolute;right:1110.5px;top:524px;font-size:15px;line-height:17px;-webkit-text-stroke:0px #7a7a7a;color:#7a7a7a;white-space:nowrap;">0,00</div>
<div id="t44" style="position:absolute;right:1083.5px;top:524px;font-size:15px;line-height:17px;-webkit-text-stroke:0px #fff;color:#fff;white-space:nowrap;text-shadow:-1px -1px 0 #8a8a8a;">5</div>
<div id="t45" style="position:absolute;right:970.5px;top:524px;font-size:15px;line-height:17px;-webkit-text-stroke:0px #7a7a7a;color:#7a7a7a;white-space:nowrap;">0,00</div>
<div id="t46" style="position:absolute;right:838px;top:524px;font-size:15px;line-height:17px;-webkit-text-stroke:0px #7a7a7a;color:#7a7a7a;white-space:nowrap;">0,00</div>
<div id="t47" style="position:absolute;right:1110.5px;top:551px;font-size:15px;line-height:17px;-webkit-text-stroke:0px #7a7a7a;color:#7a7a7a;white-space:nowrap;">0,00</div>
<div id="t48" style="position:absolute;right:1083.5px;top:551px;font-size:15px;line-height:17px;-webkit-text-stroke:0px #fff;color:#fff;white-space:nowrap;text-shadow:-1px -1px 0 #8a8a8a;">0</div>
<div id="t49" style="position:absolute;right:838px;top:551px;font-size:15px;line-height:17px;font-weight:bold;-webkit-text-stroke:0.35px #000;color:#000;white-space:nowrap;">47,97</div>
<div id="t50" style="position:absolute;right:693px;top:148px;font-size:15px;line-height:17px;-webkit-text-stroke:0px #000;color:#000;white-space:nowrap;"><u>IČO, IČ DPH</u></div>
<div style="position:absolute;left:685px;top:144px;width:310px;height:31px;background:#fff;border:1px solid #a8a8a8;box-sizing:border-box;"></div>
<div style="position:absolute;left:686px;top:145px;width:308px;height:29px;background:#fff;"></div>
<div style="position:absolute;left:775px;top:145px;width:2px;height:29px;background:#d2e2f9;"></div>
<div style="position:absolute;left:865px;top:145px;width:2px;height:29px;background:#d2e2f9;"></div>
<div style="position:absolute;left:955px;top:145px;width:2px;height:29px;background:#d2e2f9;"></div>
<div id="t51" style="position:absolute;left:690.0px;top:149px;font-size:15px;line-height:17px;-webkit-text-stroke:0px #000;color:#000;white-space:nowrap;">24567855</div>
<div id="t52" style="position:absolute;left:780.0px;top:149px;font-size:15px;line-height:17px;-webkit-text-stroke:0px #000;color:#000;white-space:nowrap;">2020879939</div>
<div style="position:absolute;left:871px;top:145px;width:84px;height:30px;overflow:hidden;"></div>
<div id="t53" style="position:absolute;left:870.0px;top:149px;font-size:15px;line-height:17px;-webkit-text-stroke:0px #000;color:#000;white-space:nowrap;clip-path:inset(0 1px 0 0);">SK20208799:</div>
<div id="t54" style="position:absolute;left:958.0px;top:149px;font-size:15px;line-height:17px;-webkit-text-stroke:0px #000;color:#000;white-space:nowrap;">P</div>
<div style="position:absolute;left:973px;top:147px;width:20px;height:26px;background:#fff;border:1px solid #cfcfcf;border-radius:2px;box-sizing:border-box;"><svg style="position:absolute;left:4.0px;top:9.0px" width="10" height="6"><path d="M0.5 0.5L5 5L9.5 0.5" stroke="#555" stroke-width="1" fill="none"/></svg></div>
<svg style="position:absolute;left:0;top:0" width="700" height="220" viewBox="0 0 700 220"><path d="M657.5 199.5L664.5 201L670 196.8L675 199.8L667.5 207.2Z" fill="#f2ec10" stroke="#1a1a1a" stroke-width="1.1" stroke-linejoin="round"/><path d="M660 201.5L666.5 204.5L672 200" stroke="#8a8a10" stroke-width="0.8" fill="none"/><path d="M662.4 189.3L672 194.3L665 200L655.5 195.3Z" fill="#fff" stroke="#6a6a6a" stroke-width="1" stroke-linejoin="round"/></svg>
<div style="position:absolute;left:685px;top:186px;width:310px;height:169px;background:#d2e2f9;border:1px solid #a8a8a8;box-sizing:border-box;"></div>
<div style="position:absolute;left:686px;top:187px;width:307px;height:138px;background:#fff;"></div>
<div id="t55" style="position:absolute;left:688.5px;top:192px;font-size:15px;line-height:17px;-webkit-text-stroke:0px #000;color:#000;white-space:nowrap;">ABC, s.r.o.</div>
<div style="position:absolute;left:972px;top:189px;width:20px;height:13px;background:#fff;border:1px solid #c8c8c8;border-radius:2px;box-sizing:border-box;"><svg style="position:absolute;left:4.5px;top:2.75px" width="9" height="5"><path d="M0 0H9L4.5 5Z" fill="#000"/></svg></div>
<div style="position:absolute;left:972px;top:203px;width:20px;height:12px;background:#fff;border:1px solid #c8c8c8;border-radius:2px;box-sizing:border-box;"><svg style="position:absolute;left:4.0px;top:3.5px" width="10" height="3"><path d="M0 0H2.6V3H0ZM3.7 0H6.3V3H3.7ZM7.4 0H10V3H7.4Z" fill="#000"/></svg></div>
<div id="t56" style="position:absolute;left:690.5px;top:272px;font-size:15px;line-height:17px;-webkit-text-stroke:0px #000;color:#000;white-space:nowrap;">Tulipánová 56</div>
<div style="position:absolute;left:736px;top:297px;width:2px;height:29px;background:#d2e2f9;"></div>
<div style="position:absolute;left:910px;top:297px;width:2px;height:29px;background:#d2e2f9;"></div>
<div id="t57" style="position:absolute;left:690.0px;top:301px;font-size:15px;line-height:17px;-webkit-text-stroke:0px #000;color:#000;white-space:nowrap;">913 05</div>
<div id="t58" style="position:absolute;left:738.5px;top:301px;font-size:15px;line-height:17px;-webkit-text-stroke:0px #000;color:#000;white-space:nowrap;">Melčice - Lieskové</div>
<div style="position:absolute;left:890px;top:299px;width:20px;height:25px;background:#fff;border:1px solid #c8c8c8;border-radius:2px;box-sizing:border-box;"><svg style="position:absolute;left:4.0px;top:10.0px" width="10" height="3"><path d="M0 0H2.6V3H0ZM3.7 0H6.3V3H3.7ZM7.4 0H10V3H7.4Z" fill="#000"/></svg></div>
<div style="position:absolute;left:972px;top:299px;width:20px;height:12px;background:#fff;border:1px solid #c8c8c8;border-radius:2px;box-sizing:border-box;"><svg style="position:absolute;left:4.5px;top:2.5px" width="9" height="5"><path d="M0 0H9L4.5 5Z" fill="#000"/></svg></div>
<div style="position:absolute;left:972px;top:312px;width:20px;height:12px;background:#fff;border:1px solid #c8c8c8;border-radius:2px;box-sizing:border-box;"><svg style="position:absolute;left:4.0px;top:3.5px" width="10" height="3"><path d="M0 0H2.6V3H0ZM3.7 0H6.3V3H3.7ZM7.4 0H10V3H7.4Z" fill="#000"/></svg></div>
<div style="position:absolute;left:685px;top:355px;width:66px;height:20px;background:#fff;border:1px solid #a8a8a8;border-top:none;border-radius:0 0 3px 3px;box-sizing:border-box;"></div>
<div style="position:absolute;left:751px;top:355px;width:118px;height:20px;background:#d2e2f9;border:1px solid #a8a8a8;border-top:none;border-radius:0 0 3px 3px;box-sizing:border-box;"></div>
<div id="t59" style="position:absolute;left:718.5px;top:357px;font-size:15px;line-height:17px;-webkit-text-stroke:0px #000;color:#000;white-space:nowrap;">adresa</div>
<div id="t60" style="position:absolute;left:808.5px;top:357px;font-size:15px;line-height:17px;-webkit-text-stroke:0px #000;color:#000;white-space:nowrap;">dodacia adresa</div>
<div id="t61" style="position:absolute;left:539.0px;top:396px;font-size:15px;line-height:17px;font-weight:bold;-webkit-text-stroke:0.35px #000;color:#000;white-space:nowrap;">Kontaktná osoba</div>
<div id="t62" style="position:absolute;left:538.5px;top:426px;font-size:15px;line-height:17px;-webkit-text-stroke:0px #000;color:#000;white-space:nowrap;"><u>Telefón,</u></div>
<div id="t63" style="position:absolute;left:598.0px;top:426px;font-size:15px;line-height:17px;-webkit-text-stroke:0px #000;color:#000;white-space:nowrap;"><u>E-mail</u></div>
<div style="position:absolute;left:685px;top:391px;width:310px;height:62px;background:#d2e2f9;border:1px solid #a8a8a8;box-sizing:border-box;"></div>
<div style="position:absolute;left:686px;top:392px;width:144px;height:29px;background:#fff;"></div>
<div style="position:absolute;left:832px;top:392px;width:161px;height:29px;background:#fff;"></div>
<div style="position:absolute;left:686px;top:423px;width:144px;height:29px;background:#fff;"></div>
<div style="position:absolute;left:832px;top:423px;width:161px;height:29px;background:#fff;"></div>
<div id="t64" style="position:absolute;left:690.0px;top:426px;font-size:15px;line-height:17px;-webkit-text-stroke:0px #000;color:#000;white-space:nowrap;">032 65478955</div>
<div id="t65" style="position:absolute;left:836.0px;top:426px;font-size:15px;line-height:17px;-webkit-text-stroke:0px #000;color:#000;white-space:nowrap;">abc@atlas.sk</div>
<div id="t66" style="position:absolute;left:538.5px;top:468px;font-size:15px;line-height:17px;-webkit-text-stroke:0px #000;color:#000;white-space:nowrap;">Číslo dokladu</div>
<div id="t67" style="position:absolute;left:538.5px;top:496px;font-size:15px;line-height:17px;-webkit-text-stroke:0px #000;color:#000;white-space:nowrap;">Dátum dokladu</div>
<div id="t68" style="position:absolute;left:538.5px;top:538px;font-size:15px;line-height:17px;-webkit-text-stroke:0px #000;color:#000;white-space:nowrap;">Sp. prijatia</div>
<div id="t69" style="position:absolute;left:538.5px;top:566px;font-size:15px;line-height:17px;-webkit-text-stroke:0px #000;color:#000;white-space:nowrap;">Sp. odovzd.</div>
<div style="position:absolute;left:685px;top:464px;width:96px;height:59px;background:#fff;border:1px solid #a8a8a8;box-sizing:border-box;"></div>
<div id="t70" style="position:absolute;left:697.0px;top:496px;font-size:15px;line-height:17px;-webkit-text-stroke:0px #000;color:#000;white-space:nowrap;">. .</div>
<div style="position:absolute;left:758px;top:495px;width:21px;height:26px;background:#fff;border:1px solid #cfcfcf;border-radius:2px;box-sizing:border-box;"><svg style="position:absolute;left:4.5px;top:9.0px" width="10" height="6"><path d="M0.5 0.5L5 5L9.5 0.5" stroke="#555" stroke-width="1" fill="none"/></svg></div>
<div style="position:absolute;left:685px;top:534px;width:96px;height:60px;background:#fff;border:1px solid #a8a8a8;box-sizing:border-box;"></div>
<div style="position:absolute;left:758px;top:537px;width:20px;height:12px;background:#fff;border:1px solid #c8c8c8;border-radius:2px;box-sizing:border-box;"><svg style="position:absolute;left:4.5px;top:2.25px" width="9" height="5"><path d="M0 0H9L4.5 5Z" fill="#000"/></svg></div>
<div style="position:absolute;left:758px;top:550px;width:20px;height:12px;background:#fff;border:1px solid #c8c8c8;border-radius:2px;box-sizing:border-box;"><svg style="position:absolute;left:4.0px;top:3.25px" width="10" height="3"><path d="M0 0H2.6V3H0ZM3.7 0H6.3V3H3.7ZM7.4 0H10V3H7.4Z" fill="#000"/></svg></div>
<div style="position:absolute;left:758px;top:564px;width:20px;height:12px;background:#fff;border:1px solid #c8c8c8;border-radius:2px;box-sizing:border-box;"><svg style="position:absolute;left:4.5px;top:2.25px" width="9" height="5"><path d="M0 0H9L4.5 5Z" fill="#000"/></svg></div>
<div style="position:absolute;left:758px;top:578px;width:20px;height:11px;background:#fff;border:1px solid #c8c8c8;border-radius:2px;box-sizing:border-box;"><svg style="position:absolute;left:4.0px;top:3.25px" width="10" height="3"><path d="M0 0H2.6V3H0ZM3.7 0H6.3V3H3.7ZM7.4 0H10V3H7.4Z" fill="#000"/></svg></div>
<div id="t71" style="position:absolute;left:810.0px;top:468px;font-size:15px;line-height:17px;-webkit-text-stroke:0px #000;color:#000;white-space:nowrap;">Stredisko</div>
<div id="t72" style="position:absolute;left:810.0px;top:496px;font-size:15px;line-height:17px;-webkit-text-stroke:0px #000;color:#000;white-space:nowrap;">Činnosť</div>
<div id="t73" style="position:absolute;left:810.0px;top:523px;font-size:15px;line-height:17px;-webkit-text-stroke:0px #000;color:#000;white-space:nowrap;">Zákazka</div>
<div id="t74" style="position:absolute;left:810.0px;top:568px;font-size:15px;line-height:17px;-webkit-text-stroke:0px #000;color:#000;white-space:nowrap;">Ceny</div>
<div style="position:absolute;left:897px;top:464px;width:98px;height:87px;background:#fff;border:1px solid #a8a8a8;box-sizing:border-box;"></div>
<div style="position:absolute;left:972px;top:467px;width:20px;height:12px;background:#fff;border:1px solid #c8c8c8;border-radius:2px;box-sizing:border-box;"><svg style="position:absolute;left:4.5px;top:2.5px" width="9" height="5"><path d="M0 0H9L4.5 5Z" fill="#000"/></svg></div>
<div style="position:absolute;left:972px;top:480px;width:20px;height:12px;background:#fff;border:1px solid #c8c8c8;border-radius:2px;box-sizing:border-box;"><svg style="position:absolute;left:4.0px;top:3.5px" width="10" height="3"><path d="M0 0H2.6V3H0ZM3.7 0H6.3V3H3.7ZM7.4 0H10V3H7.4Z" fill="#000"/></svg></div>
<div style="position:absolute;left:972px;top:494px;width:20px;height:12px;background:#fff;border:1px solid #c8c8c8;border-radius:2px;box-sizing:border-box;"><svg style="position:absolute;left:4.5px;top:2.5px" width="9" height="5"><path d="M0 0H9L4.5 5Z" fill="#000"/></svg></div>
<div style="position:absolute;left:972px;top:508px;width:20px;height:12px;background:#fff;border:1px solid #c8c8c8;border-radius:2px;box-sizing:border-box;"><svg style="position:absolute;left:4.0px;top:3.5px" width="10" height="3"><path d="M0 0H2.6V3H0ZM3.7 0H6.3V3H3.7ZM7.4 0H10V3H7.4Z" fill="#000"/></svg></div>
<div style="position:absolute;left:972px;top:522px;width:20px;height:12px;background:#fff;border:1px solid #c8c8c8;border-radius:2px;box-sizing:border-box;"><svg style="position:absolute;left:4.5px;top:2.5px" width="9" height="5"><path d="M0 0H9L4.5 5Z" fill="#000"/></svg></div>
<div style="position:absolute;left:972px;top:535px;width:20px;height:12px;background:#fff;border:1px solid #c8c8c8;border-radius:2px;box-sizing:border-box;"><svg style="position:absolute;left:4.0px;top:3.5px" width="10" height="3"><path d="M0 0H2.6V3H0ZM3.7 0H6.3V3H3.7ZM7.4 0H10V3H7.4Z" fill="#000"/></svg></div>
<div style="position:absolute;left:897px;top:564px;width:98px;height:30px;background:#fff;border:1px solid #a8a8a8;box-sizing:border-box;"></div>
<div style="position:absolute;left:972px;top:566px;width:20px;height:12px;background:#fff;border:1px solid #c8c8c8;border-radius:2px;box-sizing:border-box;"><svg style="position:absolute;left:4.5px;top:2.5px" width="9" height="5"><path d="M0 0H9L4.5 5Z" fill="#000"/></svg></div>
<div style="position:absolute;left:972px;top:579px;width:20px;height:12px;background:#fff;border:1px solid #c8c8c8;border-radius:2px;box-sizing:border-box;"><svg style="position:absolute;left:4.0px;top:3.5px" width="10" height="3"><path d="M0 0H2.6V3H0ZM3.7 0H6.3V3H3.7ZM7.4 0H10V3H7.4Z" fill="#000"/></svg></div>
<div style="position:absolute;left:2px;top:625px;width:1177px;height:171px;background:#d2e2f9;border:1px solid #7aa4e4;box-sizing:border-box;"></div>
<div style="position:absolute;left:3px;top:653px;width:1175px;height:2px;background:#fff;"></div>
<div style="position:absolute;left:3px;top:655px;width:1175px;height:1px;background:#6f9be0;"></div>
<div style="position:absolute;left:7px;top:629px;width:34px;height:24px;background:#d2e2f9;border-top:1px solid #fff;border-left:1px solid #fff;border-top-left-radius:4px;border-top-right-radius:2px;box-sizing:border-box;"></div>
<div style="position:absolute;left:39px;top:630px;width:2px;height:23px;background:#5b8ad6;border-top-right-radius:2px;"></div>
<div style="position:absolute;left:43px;top:629px;width:33px;height:24px;background:#d2e2f9;border-top:1px solid #fff;border-left:1px solid #fff;border-top-left-radius:4px;border-top-right-radius:2px;box-sizing:border-box;"></div>
<div style="position:absolute;left:74px;top:630px;width:2px;height:23px;background:#5b8ad6;border-top-right-radius:2px;"></div>
<div style="position:absolute;left:78px;top:629px;width:139px;height:24px;background:#d2e2f9;border-top:1px solid #fff;border-left:1px solid #fff;border-top-left-radius:4px;border-top-right-radius:2px;box-sizing:border-box;"></div>
<div style="position:absolute;left:215px;top:630px;width:2px;height:23px;background:#5b8ad6;border-top-right-radius:2px;"></div>
<div style="position:absolute;left:285px;top:628px;width:145px;height:25px;background:#d6e5fa;border-top:1px solid #fff;border-left:1px solid #fff;border-top-left-radius:4px;border-top-right-radius:2px;box-sizing:border-box;"></div>
<div style="position:absolute;left:428px;top:629px;width:2px;height:24px;background:#5b8ad6;border-top-right-radius:2px;"></div>
<div style="position:absolute;left:431px;top:629px;width:94px;height:24px;background:#d2e2f9;border-top:1px solid #fff;border-left:1px solid #fff;border-top-left-radius:4px;border-top-right-radius:2px;box-sizing:border-box;"></div>
<div style="position:absolute;left:523px;top:630px;width:2px;height:23px;background:#5b8ad6;border-top-right-radius:2px;"></div>
<div style="position:absolute;left:526px;top:629px;width:91px;height:24px;background:#d2e2f9;border-top:1px solid #fff;border-left:1px solid #fff;border-top-left-radius:4px;border-top-right-radius:2px;box-sizing:border-box;"></div>
<div style="position:absolute;left:615px;top:630px;width:2px;height:23px;background:#5b8ad6;border-top-right-radius:2px;"></div>
<div style="position:absolute;left:619px;top:629px;width:112px;height:24px;background:#d2e2f9;border-top:1px solid #fff;border-left:1px solid #fff;border-top-left-radius:4px;border-top-right-radius:2px;box-sizing:border-box;"></div>
<div style="position:absolute;left:729px;top:630px;width:2px;height:23px;background:#5b8ad6;border-top-right-radius:2px;"></div>
<div style="position:absolute;left:732px;top:629px;width:151px;height:24px;background:#d2e2f9;border-top:1px solid #fff;border-left:1px solid #fff;border-top-left-radius:4px;border-top-right-radius:2px;box-sizing:border-box;"></div>
<div style="position:absolute;left:881px;top:630px;width:2px;height:23px;background:#5b8ad6;border-top-right-radius:2px;"></div>
<div style="position:absolute;left:884px;top:629px;width:127px;height:24px;background:#d2e2f9;border-top:1px solid #fff;border-left:1px solid #fff;border-top-left-radius:4px;border-top-right-radius:2px;box-sizing:border-box;"></div>
<div style="position:absolute;left:1009px;top:630px;width:2px;height:23px;background:#5b8ad6;border-top-right-radius:2px;"></div>
<div style="position:absolute;left:1013px;top:629px;width:106px;height:24px;background:#d2e2f9;border-top:1px solid #fff;border-left:1px solid #fff;border-top-left-radius:4px;border-top-right-radius:2px;box-sizing:border-box;"></div>
<div style="position:absolute;left:1117px;top:630px;width:2px;height:23px;background:#5b8ad6;border-top-right-radius:2px;"></div>
<div style="position:absolute;left:219px;top:629px;width:69px;height:24px;background:#d2e2f9;border-top:1px solid #fff;border-left:1px solid #fff;border-right:1px solid #fff;border-top-left-radius:4px;border-top-right-radius:4px;box-sizing:border-box;"></div>
<div style="position:absolute;left:285px;top:628px;width:145px;height:25px;background:#d6e5fa;border-top:1px solid #fff;border-left:1px solid #fff;border-top-left-radius:4px;border-top-right-radius:2px;box-sizing:border-box;"></div>
<div style="position:absolute;left:428px;top:629px;width:2px;height:24px;background:#5b8ad6;"></div>
<svg style="position:absolute;left:18.5px;top:637.5px;" width="10" height="9" viewBox="0 0 10 9"><path d="M5 0.3V8.7M1 2.3L9 6.7M9 2.3L1 6.7" stroke="#1a1a8a" stroke-width="1.5"/></svg>
<svg style="position:absolute;left:52px;top:633px;" width="16" height="15" viewBox="0 0 16 15"><path d="M2 1H13L9 6V10H6V6Z" fill="none" stroke="#8a8a8a" stroke-width="1.1"/><path d="M1 12H4M6 12H9M11 12H14M1 14.5H4M6 14.5H9M11 14.5H14" stroke="#8a8a8a" stroke-width="1.1"/></svg>
<svg style="position:absolute;left:83px;top:633px;" width="16" height="15" viewBox="0 0 16 15"><rect x="1" y="1" width="14" height="13" rx="1.5" fill="#fdf58a" stroke="#2b2f7a" stroke-width="1.6"/><path d="M4 5H12M4 7.5H12M4 10H12" stroke="#2b2f7a" stroke-width="1.2"/></svg>
<div id="t75" style="position:absolute;left:105.5px;top:633px;font-size:15px;line-height:17px;-webkit-text-stroke:0px #2b3c7a;color:#2b3c7a;white-space:nowrap;">Predmet servisu</div>
<svg style="position:absolute;left:224px;top:633px;" width="16" height="15" viewBox="0 0 16 15"><rect x="1" y="1" width="14" height="13" rx="1.5" fill="#fdf58a" stroke="#2b2f7a" stroke-width="1.6"/><path d="M4 5H12M4 7.5H12M4 10H12" stroke="#2b2f7a" stroke-width="1.2"/></svg>
<div id="t76" style="position:absolute;left:246.0px;top:633px;font-size:15px;line-height:17px;-webkit-text-stroke:0px #2b3c7a;color:#2b3c7a;white-space:nowrap;">Stavy</div>
<svg style="position:absolute;left:293px;top:632px;" width="16" height="15" viewBox="0 0 16 15"><rect x="1" y="1" width="14" height="13" rx="1.5" fill="#fdf58a" stroke="#2b2f7a" stroke-width="1.6"/><path d="M4 5H12M4 7.5H12M4 10H12" stroke="#2b2f7a" stroke-width="1.2"/></svg>
<div id="t77" style="position:absolute;left:316.5px;top:632px;font-size:15px;line-height:17px;-webkit-text-stroke:0px #2b3c7a;color:#2b3c7a;white-space:nowrap;">Položky servisu</div>
<svg style="position:absolute;left:436px;top:632px;" width="17" height="17" viewBox="0 0 17 17"><circle cx="8.5" cy="8.5" r="7.3" fill="none" stroke="#2b2f7a" stroke-width="1.6"/><rect x="7.6" y="7" width="1.9" height="6" fill="#2b2f7a"/><rect x="7.6" y="4" width="1.9" height="1.9" fill="#2b2f7a"/></svg>
<div id="t78" style="position:absolute;left:458.5px;top:633px;font-size:15px;line-height:17px;-webkit-text-stroke:0px #2b3c7a;color:#2b3c7a;white-space:nowrap;">Doklady</div>
<svg style="position:absolute;left:531px;top:633px;" width="16" height="15" viewBox="0 0 16 15"><rect x="1" y="1" width="14" height="13" rx="1.5" fill="#fff" stroke="#2b2f7a" stroke-width="1.6"/><path d="M4 5H12M4 7.5H12M4 10H12" stroke="#2b2f7a" stroke-width="1.2"/></svg>
<div id="t79" style="position:absolute;left:554.5px;top:633px;font-size:15px;line-height:17px;-webkit-text-stroke:0px #2b3c7a;color:#2b3c7a;white-space:nowrap;">Udalosti</div>
<svg style="position:absolute;left:623px;top:633px;" width="18" height="15" viewBox="0 0 18 15"><path d="M1 2H7L9 4H17V14H1Z" fill="none" stroke="#2b2f7a" stroke-width="1.6"/><path d="M1 6H17" stroke="#2b2f7a" stroke-width="1.2"/></svg>
<div id="t80" style="position:absolute;left:646.5px;top:633px;font-size:15px;line-height:17px;-webkit-text-stroke:0px #2b3c7a;color:#2b3c7a;white-space:nowrap;">Dokumenty</div>
<svg style="position:absolute;left:738px;top:632px;" width="14" height="17" viewBox="0 0 14 17"><path d="M1 1H8L13 6V16H1Z" fill="none" stroke="#2b2f7a" stroke-width="1.7"/><path d="M8 1V6H13" fill="none" stroke="#2b2f7a" stroke-width="1.2"/></svg>
<div id="t81" style="position:absolute;left:759.0px;top:633px;font-size:15px;line-height:17px;-webkit-text-stroke:0px #2b3c7a;color:#2b3c7a;white-space:nowrap;">História záznamu</div>
<svg style="position:absolute;left:890px;top:632px;" width="14" height="17" viewBox="0 0 14 17"><path d="M1 1H8L13 6V16H1Z" fill="none" stroke="#2b2f7a" stroke-width="1.7"/><path d="M8 1V6H13" fill="none" stroke="#2b2f7a" stroke-width="1.2"/></svg>
<div id="t82" style="position:absolute;left:910.5px;top:633px;font-size:15px;line-height:17px;-webkit-text-stroke:0px #2b3c7a;color:#2b3c7a;white-space:nowrap;">Zistená chyba</div>
<svg style="position:absolute;left:1018px;top:632px;" width="14" height="17" viewBox="0 0 14 17"><path d="M1 1H8L13 6V16H1Z" fill="none" stroke="#2b2f7a" stroke-width="1.7"/><path d="M8 1V6H13" fill="none" stroke="#2b2f7a" stroke-width="1.2"/></svg>
<div id="t83" style="position:absolute;left:1039.5px;top:633px;font-size:15px;line-height:17px;-webkit-text-stroke:0px #2b3c7a;color:#2b3c7a;white-space:nowrap;">Poznámky</div>
<svg style="position:absolute;left:1142px;top:635px;" width="7" height="9" viewBox="0 0 7 9"><path d="M6.5 0V9L0 4.5Z" fill="#bdbdbd"/></svg>
<svg style="position:absolute;left:1161.5px;top:635px;" width="7" height="9" viewBox="0 0 7 9"><path d="M0 0V9L6.5 4.5Z" fill="#bdbdbd"/></svg>
<div style="position:absolute;left:3px;top:656px;width:1154px;height:139px;background:#d2e2f9;"></div>
<div style="position:absolute;left:3px;top:655px;width:43px;height:140px;background:#d2e2f9;"></div>
<div style="position:absolute;left:47px;top:655px;width:74px;height:21px;border-right:1px solid #fff;border-bottom:1px solid #fff;box-sizing:border-box;"></div>
<div style="position:absolute;left:121px;top:655px;width:175px;height:21px;border-right:1px solid #fff;border-bottom:1px solid #fff;box-sizing:border-box;"></div>
<div style="position:absolute;left:296px;top:655px;width:73px;height:21px;border-right:1px solid #fff;border-bottom:1px solid #fff;box-sizing:border-box;"></div>
<div style="position:absolute;left:369px;top:655px;width:88px;height:21px;border-right:1px solid #fff;border-bottom:1px solid #fff;box-sizing:border-box;"></div>
<div style="position:absolute;left:457px;top:655px;width:48px;height:21px;border-right:1px solid #fff;border-bottom:1px solid #fff;box-sizing:border-box;"></div>
<div style="position:absolute;left:505px;top:655px;width:106px;height:21px;border-right:1px solid #fff;border-bottom:1px solid #fff;box-sizing:border-box;"></div>
<div style="position:absolute;left:611px;top:655px;width:24px;height:21px;border-right:1px solid #fff;border-bottom:1px solid #fff;box-sizing:border-box;"></div>
<div style="position:absolute;left:635px;top:655px;width:44px;height:21px;border-right:1px solid #fff;border-bottom:1px solid #fff;box-sizing:border-box;"></div>
<div style="position:absolute;left:679px;top:655px;width:56px;height:21px;border-right:1px solid #fff;border-bottom:1px solid #fff;box-sizing:border-box;"></div>
<div style="position:absolute;left:735px;top:655px;width:63px;height:21px;border-right:1px solid #fff;border-bottom:1px solid #fff;box-sizing:border-box;"></div>
<div style="position:absolute;left:798px;top:655px;width:107px;height:21px;border-right:1px solid #fff;border-bottom:1px solid #fff;box-sizing:border-box;"></div>
<div style="position:absolute;left:905px;top:655px;width:92px;height:21px;border-right:1px solid #fff;border-bottom:1px solid #fff;box-sizing:border-box;"></div>
<div style="position:absolute;left:47px;top:655px;width:74px;height:21px;border:1px solid #fff;border-right:1.5px solid #555;border-bottom:2px solid #555;box-sizing:border-box;"></div>
<div style="position:absolute;left:47px;top:675px;width:1110px;height:1px;background:#8a8a8a;"></div>
<div style="position:absolute;left:47px;top:676px;width:1110px;height:1px;background:#fff;"></div>
<div style="position:absolute;left:46px;top:656px;width:1px;height:39px;background:#fff;"></div>
<div style="position:absolute;left:47px;top:676px;width:445px;height:19px;border-right:1px solid #fff;box-sizing:border-box;"></div>
<div style="position:absolute;left:492px;top:676px;width:120px;height:19px;border-right:1px solid #fff;box-sizing:border-box;"></div>
<div style="position:absolute;left:612px;top:676px;width:106px;height:19px;border-right:1px solid #fff;box-sizing:border-box;"></div>
<div style="position:absolute;left:718px;top:676px;width:106px;height:19px;border-right:1px solid #fff;box-sizing:border-box;"></div>
<div style="position:absolute;left:824px;top:676px;width:93px;height:19px;border-right:1px solid #fff;box-sizing:border-box;"></div>
<div style="position:absolute;left:3px;top:695px;width:1154px;height:1px;background:#8a8a8a;"></div>
<div id="t84" style="position:absolute;left:84px;top:658px;font-size:15px;line-height:17px;font-weight:bold;-webkit-text-stroke:0.35px #000;color:#000;white-space:nowrap;">Kód</div>
<div id="t85" style="position:absolute;left:209px;top:658px;font-size:15px;line-height:17px;-webkit-text-stroke:0px #000;color:#000;white-space:nowrap;">Položka</div>
<div id="t86" style="position:absolute;left:333px;top:658px;font-size:15px;line-height:17px;-webkit-text-stroke:0px #000;color:#000;white-space:nowrap;">Množstvo</div>
<div id="t87" style="position:absolute;left:413.5px;top:658px;font-size:15px;line-height:17px;-webkit-text-stroke:0px #000;color:#000;white-space:nowrap;">Prenesené</div>
<div id="t88" style="position:absolute;left:482px;top:658px;font-size:15px;line-height:17px;-webkit-text-stroke:0px #000;color:#000;white-space:nowrap;">M.j.</div>
<div id="t89" style="position:absolute;left:558.5px;top:658px;font-size:15px;line-height:17px;-webkit-text-stroke:0px #000;color:#000;white-space:nowrap;">Jedn.cena</div>
<div id="t90" style="position:absolute;left:624px;top:658px;font-size:15px;line-height:17px;-webkit-text-stroke:0px #000;color:#000;white-space:nowrap;">S</div>
<div id="t91" style="position:absolute;left:657.5px;top:658px;font-size:15px;line-height:17px;-webkit-text-stroke:0px #000;color:#000;white-space:nowrap;">DPH</div>
<div id="t92" style="position:absolute;left:707.5px;top:658px;font-size:15px;line-height:17px;-webkit-text-stroke:0px #000;color:#000;white-space:nowrap;">DPH %</div>
<div id="t93" style="position:absolute;left:767.5px;top:658px;font-size:15px;line-height:17px;-webkit-text-stroke:0px #000;color:#000;white-space:nowrap;">Zľava %</div>
<div id="t94" style="position:absolute;left:851px;top:658px;font-size:15px;line-height:17px;-webkit-text-stroke:0px #000;color:#000;white-space:nowrap;">Čiastka</div>
<div id="t95" style="position:absolute;left:950.5px;top:658px;font-size:15px;line-height:17px;-webkit-text-stroke:0px #000;color:#000;white-space:nowrap;">DPH</div>
<div id="t96" style="position:absolute;left:269.5px;top:678px;font-size:15px;line-height:17px;-webkit-text-stroke:0px #000;color:#000;white-space:nowrap;">Poznámka</div>
<div id="t97" style="position:absolute;left:552.5px;top:678px;font-size:15px;line-height:17px;-webkit-text-stroke:0px #000;color:#000;white-space:nowrap;">Evidenčné č.</div>
<div id="t98" style="position:absolute;left:665px;top:678px;font-size:15px;line-height:17px;-webkit-text-stroke:0px #000;color:#000;white-space:nowrap;">Stredisko</div>
<div id="t99" style="position:absolute;left:771px;top:678px;font-size:15px;line-height:17px;-webkit-text-stroke:0px #000;color:#000;white-space:nowrap;">Činnosť</div>
<div id="t100" style="position:absolute;left:870.5px;top:678px;font-size:15px;line-height:17px;-webkit-text-stroke:0px #000;color:#000;white-space:nowrap;">Zákazka</div>
<div style="position:absolute;left:47px;top:696px;width:74px;height:25px;background:#ffffff;border-right:1px solid #e6ecf5;border-bottom:1px solid #eef2f8;box-sizing:border-box;"></div>
<div style="position:absolute;left:121px;top:696px;width:175px;height:25px;background:#ffffff;border-right:1px solid #e6ecf5;border-bottom:1px solid #eef2f8;box-sizing:border-box;"></div>
<div style="position:absolute;left:296px;top:696px;width:73px;height:25px;background:#ffffff;border-right:1px solid #e6ecf5;border-bottom:1px solid #eef2f8;box-sizing:border-box;"></div>
<div style="position:absolute;left:369px;top:696px;width:88px;height:25px;background:#ffffff;border-right:1px solid #e6ecf5;border-bottom:1px solid #eef2f8;box-sizing:border-box;"></div>
<div style="position:absolute;left:457px;top:696px;width:48px;height:25px;background:#ffffff;border-right:1px solid #e6ecf5;border-bottom:1px solid #eef2f8;box-sizing:border-box;"></div>
<div style="position:absolute;left:505px;top:696px;width:106px;height:25px;background:#ffffff;border-right:1px solid #e6ecf5;border-bottom:1px solid #eef2f8;box-sizing:border-box;"></div>
<div style="position:absolute;left:611px;top:696px;width:24px;height:25px;background:#ffffff;border-right:1px solid #e6ecf5;border-bottom:1px solid #eef2f8;box-sizing:border-box;"></div>
<div style="position:absolute;left:635px;top:696px;width:44px;height:25px;background:#ffffff;border-right:1px solid #e6ecf5;border-bottom:1px solid #eef2f8;box-sizing:border-box;"></div>
<div style="position:absolute;left:679px;top:696px;width:56px;height:25px;background:#ffffff;border-right:1px solid #e6ecf5;border-bottom:1px solid #eef2f8;box-sizing:border-box;"></div>
<div style="position:absolute;left:735px;top:696px;width:63px;height:25px;background:#ffffff;border-right:1px solid #e6ecf5;border-bottom:1px solid #eef2f8;box-sizing:border-box;"></div>
<div style="position:absolute;left:798px;top:696px;width:107px;height:25px;background:#ffffff;border-right:1px solid #e6ecf5;border-bottom:1px solid #eef2f8;box-sizing:border-box;"></div>
<div style="position:absolute;left:905px;top:696px;width:92px;height:25px;background:#ffffff;border-right:1px solid #e6ecf5;border-bottom:1px solid #eef2f8;box-sizing:border-box;"></div>
<div style="position:absolute;left:47px;top:721px;width:445px;height:24px;background:#ffffff;border-right:1px solid #e6ecf5;box-sizing:border-box;"></div>
<div style="position:absolute;left:492px;top:721px;width:120px;height:24px;background:#ffffff;border-right:1px solid #e6ecf5;box-sizing:border-box;"></div>
<div style="position:absolute;left:612px;top:721px;width:106px;height:24px;background:#ffffff;border-right:1px solid #e6ecf5;box-sizing:border-box;"></div>
<div style="position:absolute;left:718px;top:721px;width:106px;height:24px;background:#ffffff;border-right:1px solid #e6ecf5;box-sizing:border-box;"></div>
<div style="position:absolute;left:824px;top:721px;width:93px;height:24px;background:#ffffff;border-right:1px solid #e6ecf5;box-sizing:border-box;"></div>
<div id="t101" style="position:absolute;left:125.5px;top:700px;font-size:15px;line-height:17px;font-weight:bold;-webkit-text-stroke:0.35px #000;color:#000;white-space:nowrap;">Ovládač - súčiastky</div>
<div id="t102" style="position:absolute;right:985.5px;top:700px;font-size:15px;line-height:17px;font-weight:bold;-webkit-text-stroke:0.35px #000;color:#000;white-space:nowrap;">1,00</div>
<div id="t103" style="position:absolute;right:897px;top:700px;font-size:15px;line-height:17px;-webkit-text-stroke:0px #000;color:#000;white-space:nowrap;">0,00</div>
<div id="t104" style="position:absolute;right:743.5px;top:700px;font-size:15px;line-height:17px;font-weight:bold;-webkit-text-stroke:0.35px #000;color:#000;white-space:nowrap;">15,00</div>
<div style="position:absolute;left:615px;top:701px;width:16px;height:15px;background:#fff;border:1px solid #333;border-right-color:#a0a0a0;border-bottom-color:#a0a0a0;box-sizing:border-box;"></div>
<div id="t105" style="position:absolute;left:638.0px;top:700px;font-size:15px;line-height:17px;font-weight:bold;-webkit-text-stroke:0.35px #000;color:#000;white-space:nowrap;">23 %</div>
<div id="t106" style="position:absolute;right:556.5px;top:700px;font-size:15px;line-height:17px;-webkit-text-stroke:0px #000;color:#000;white-space:nowrap;">0,00%</div>
<div id="t107" style="position:absolute;right:450.5px;top:700px;font-size:15px;line-height:17px;-webkit-text-stroke:0px #000;color:#000;white-space:nowrap;">15,00</div>
<div id="t108" style="position:absolute;right:357.5px;top:700px;font-size:15px;line-height:17px;-webkit-text-stroke:0px #000;color:#000;white-space:nowrap;">3,45</div>
<div style="position:absolute;left:47px;top:746px;width:74px;height:25px;background:#fefde5;border-right:1px solid #e6ecf5;border-bottom:1px solid #eef2f8;box-sizing:border-box;"></div>
<div style="position:absolute;left:121px;top:746px;width:175px;height:25px;background:#fefde5;border-right:1px solid #e6ecf5;border-bottom:1px solid #eef2f8;box-sizing:border-box;"></div>
<div style="position:absolute;left:296px;top:746px;width:73px;height:25px;background:#fefde5;border-right:1px solid #e6ecf5;border-bottom:1px solid #eef2f8;box-sizing:border-box;"></div>
<div style="position:absolute;left:369px;top:746px;width:88px;height:25px;background:#fefde5;border-right:1px solid #e6ecf5;border-bottom:1px solid #eef2f8;box-sizing:border-box;"></div>
<div style="position:absolute;left:457px;top:746px;width:48px;height:25px;background:#fefde5;border-right:1px solid #e6ecf5;border-bottom:1px solid #eef2f8;box-sizing:border-box;"></div>
<div style="position:absolute;left:505px;top:746px;width:106px;height:25px;background:#fefde5;border-right:1px solid #e6ecf5;border-bottom:1px solid #eef2f8;box-sizing:border-box;"></div>
<div style="position:absolute;left:611px;top:746px;width:24px;height:25px;background:#fefde5;border-right:1px solid #e6ecf5;border-bottom:1px solid #eef2f8;box-sizing:border-box;"></div>
<div style="position:absolute;left:635px;top:746px;width:44px;height:25px;background:#fefde5;border-right:1px solid #e6ecf5;border-bottom:1px solid #eef2f8;box-sizing:border-box;"></div>
<div style="position:absolute;left:679px;top:746px;width:56px;height:25px;background:#fefde5;border-right:1px solid #e6ecf5;border-bottom:1px solid #eef2f8;box-sizing:border-box;"></div>
<div style="position:absolute;left:735px;top:746px;width:63px;height:25px;background:#fefde5;border-right:1px solid #e6ecf5;border-bottom:1px solid #eef2f8;box-sizing:border-box;"></div>
<div style="position:absolute;left:798px;top:746px;width:107px;height:25px;background:#fefde5;border-right:1px solid #e6ecf5;border-bottom:1px solid #eef2f8;box-sizing:border-box;"></div>
<div style="position:absolute;left:905px;top:746px;width:92px;height:25px;background:#fefde5;border-right:1px solid #e6ecf5;border-bottom:1px solid #eef2f8;box-sizing:border-box;"></div>
<div style="position:absolute;left:47px;top:771px;width:445px;height:24px;background:#fefde5;border-right:1px solid #e6ecf5;box-sizing:border-box;"></div>
<div style="position:absolute;left:492px;top:771px;width:120px;height:24px;background:#fefde5;border-right:1px solid #e6ecf5;box-sizing:border-box;"></div>
<div style="position:absolute;left:612px;top:771px;width:106px;height:24px;background:#fefde5;border-right:1px solid #e6ecf5;box-sizing:border-box;"></div>
<div style="position:absolute;left:718px;top:771px;width:106px;height:24px;background:#fefde5;border-right:1px solid #e6ecf5;box-sizing:border-box;"></div>
<div style="position:absolute;left:824px;top:771px;width:93px;height:24px;background:#fefde5;border-right:1px solid #e6ecf5;box-sizing:border-box;"></div>
<div id="t109" style="position:absolute;left:125.5px;top:750px;font-size:15px;line-height:17px;font-weight:bold;-webkit-text-stroke:0.35px #000;color:#000;white-space:nowrap;">Práca</div>
<div id="t110" style="position:absolute;right:985.5px;top:750px;font-size:15px;line-height:17px;font-weight:bold;-webkit-text-stroke:0.35px #000;color:#000;white-space:nowrap;">2,00</div>
<div id="t111" style="position:absolute;right:897px;top:750px;font-size:15px;line-height:17px;-webkit-text-stroke:0px #000;color:#000;white-space:nowrap;">0,00</div>
<div id="t112" style="position:absolute;right:743.5px;top:750px;font-size:15px;line-height:17px;font-weight:bold;-webkit-text-stroke:0.35px #000;color:#000;white-space:nowrap;">12,00</div>
<div style="position:absolute;left:615px;top:751px;width:16px;height:15px;background:#fff;border:1px solid #333;border-right-color:#a0a0a0;border-bottom-color:#a0a0a0;box-sizing:border-box;"></div>
<div id="t113" style="position:absolute;left:638.0px;top:750px;font-size:15px;line-height:17px;font-weight:bold;-webkit-text-stroke:0.35px #000;color:#000;white-space:nowrap;">23 %</div>
<div id="t114" style="position:absolute;right:556.5px;top:750px;font-size:15px;line-height:17px;-webkit-text-stroke:0px #000;color:#000;white-space:nowrap;">0,00%</div>
<div id="t115" style="position:absolute;right:450.5px;top:750px;font-size:15px;line-height:17px;-webkit-text-stroke:0px #000;color:#000;white-space:nowrap;">24,00</div>
<div id="t116" style="position:absolute;right:357.5px;top:750px;font-size:15px;line-height:17px;-webkit-text-stroke:0px #000;color:#000;white-space:nowrap;">5,52</div>
<div style="position:absolute;left:3px;top:696px;width:44px;height:50px;background:#d2e2f9;border:1px solid #fff;border-right:2px solid #555;border-bottom:2px solid #555;box-sizing:border-box;"></div>
<div style="position:absolute;left:3px;top:746px;width:44px;height:49px;background:#d2e2f9;border-top:1px solid #fff;border-right:1px solid #9ab;box-sizing:border-box;"></div>
<div id="t117" style="position:absolute;left:24px;top:713px;font-size:15px;line-height:17px;font-weight:bold;-webkit-text-stroke:0.35px #000;color:#000;white-space:nowrap;">1</div>
<div id="t118" style="position:absolute;left:24px;top:763px;font-size:15px;line-height:17px;-webkit-text-stroke:0px #000;color:#000;white-space:nowrap;">2</div>
<div style="position:absolute;left:1157px;top:656px;width:21px;height:139px;background:#efefef;"></div>
<svg style="position:absolute;left:1161px;top:662px;" width="12" height="10" viewBox="0 0 12 10"><path d="M1 1H11M2 8L6 3.5L10 8" stroke="#000" stroke-width="1.6" fill="none"/></svg>
<div style="position:absolute;left:1166px;top:697px;width:2px;height:22px;background:#8a8a8a;border-radius:1px;"></div>
<svg style="position:absolute;left:1161px;top:758px;" width="12" height="10" viewBox="0 0 12 10"><path d="M1 9H11M2 2L6 6.5L10 2" stroke="#000" stroke-width="1.6" fill="none"/></svg>
<svg style="position:absolute;left:1162px;top:779.5px;" width="10" height="10" viewBox="0 0 10 10"><path d="M0 0H3V3H0ZM7 0H10V3H7ZM0 7H3V10H0ZM7 7H10V10H7ZM3.4 3.4H6.6V6.6H3.4Z" fill="#000"/></svg>
<div style="position:absolute;left:1px;top:797px;width:1347px;height:23px;background:#f0f0f0;"></div>
<div id="t119" style="position:absolute;left:2.5px;top:801px;font-size:15px;line-height:17px;-webkit-text-stroke:0px #111;color:#111;white-space:nowrap;">Pridá nové položky z vybranej prijatej objednávky.</div>
<div style="position:absolute;left:932px;top:798px;width:1px;height:22px;background:#d9d9d9;"></div>
<div style="position:absolute;left:981px;top:798px;width:1px;height:22px;background:#d9d9d9;"></div>
<div style="position:absolute;left:1017px;top:798px;width:1px;height:22px;background:#d9d9d9;"></div>
<div style="position:absolute;left:1050px;top:798px;width:1px;height:22px;background:#d9d9d9;"></div>
<div style="position:absolute;left:1078px;top:798px;width:1px;height:22px;background:#d9d9d9;"></div>
<div style="position:absolute;left:1106px;top:798px;width:1px;height:22px;background:#d9d9d9;"></div>
<div style="position:absolute;left:1229px;top:798px;width:1px;height:22px;background:#d9d9d9;"></div>
<div style="position:absolute;left:1268px;top:798px;width:1px;height:22px;background:#d9d9d9;"></div>
<div style="position:absolute;left:1296px;top:798px;width:1px;height:22px;background:#d9d9d9;"></div>
<div style="position:absolute;left:1325px;top:798px;width:1px;height:22px;background:#d9d9d9;"></div>
<div id="t120" style="position:absolute;left:774px;top:801px;font-size:15px;line-height:17px;-webkit-text-stroke:0px #000;color:#000;white-space:nowrap;">Nový s.r.o.</div>
<div id="t121" style="position:absolute;left:934.5px;top:801px;font-size:15px;line-height:17px;-webkit-text-stroke:0px #000;color:#000;white-space:nowrap;">2025</div>
<div id="t122" style="position:absolute;left:1022.0px;top:801px;font-size:15px;line-height:17px;-webkit-text-stroke:0px #111;color:#111;white-space:nowrap;">@</div>
<svg style="position:absolute;left:1055px;top:800px;" width="19" height="17" viewBox="0 0 19 17"><path d="M2 9L7 15L17 2" stroke="#4ad1d9" stroke-width="3" fill="none" stroke-linecap="round"/><path d="M2 9L7 15L17 2" stroke="#2a8a9a" stroke-width="0.6" fill="none"/></svg>
<svg style="position:absolute;left:1336px;top:808px;" width="12" height="12" viewBox="0 0 12 12"><path d="M9 1H11V3H9ZM6 4H8V6H6ZM9 4H11V6H9ZM3 7H5V9H3ZM6 7H8V9H6ZM9 7H11V9H9Z" fill="#b0b0b0"/></svg>
<div style="position:absolute;left:347px;top:98px;width:274px;height:286px;background:#f8f7f5;border:1px solid #6e7b8e;box-sizing:border-box;box-shadow:1px 1px 0 rgba(60,70,90,0.45), 2px 2px 2px rgba(60,70,90,0.2);"></div>
<div style="position:absolute;left:348px;top:99px;width:28px;height:284px;background:linear-gradient(90deg,#e6effc 0%,#c6daf6 40%,#9dbdee 80%,#87ade7 100%);"></div>
<div style="position:absolute;left:383px;top:131px;width:225px;height:1px;background:#7897cd;"></div>
<div style="position:absolute;left:383px;top:216px;width:225px;height:1px;background:#7897cd;"></div>
<div style="position:absolute;left:383px;top:351px;width:225px;height:1px;background:#7897cd;"></div>
<div style="position:absolute;left:350px;top:161px;width:268px;height:25px;background:#fde6b8;border:1px solid #2e3e5c;box-sizing:border-box;"></div>
<div id="t123" style="position:absolute;left:385.5px;top:105px;font-size:15px;line-height:17px;-webkit-text-stroke:0px #111;color:#111;white-space:nowrap;"><u>S</u>klady -&gt;</div>
<div id="t124" style="position:absolute;left:385.5px;top:140px;font-size:15px;line-height:17px;-webkit-text-stroke:0px #111;color:#111;white-space:nowrap;"><u>P</u>oložky servisu -&gt;</div>
<div id="t125" style="position:absolute;left:385.5px;top:165px;font-size:15px;line-height:17px;-webkit-text-stroke:0px #111;color:#111;white-space:nowrap;">Položky z prijatej <u>o</u>bjednávky -&gt;</div>
<div id="t126" style="position:absolute;left:385.5px;top:190px;font-size:15px;line-height:17px;-webkit-text-stroke:0px #111;color:#111;white-space:nowrap;">Po<u>l</u>ožky z výdajky -&gt;</div>
<div id="t127" style="position:absolute;left:385.5px;top:225px;font-size:15px;line-height:17px;-webkit-text-stroke:0px #111;color:#111;white-space:nowrap;">Predaj<u>k</u>y -&gt;</div>
<div id="t128" style="position:absolute;left:385.5px;top:250px;font-size:15px;line-height:17px;-webkit-text-stroke:0px #111;color:#111;white-space:nowrap;">Prijaté <u>o</u>bjednávky -&gt;</div>
<div id="t129" style="position:absolute;left:385.5px;top:275px;font-size:15px;line-height:17px;-webkit-text-stroke:0px #111;color:#111;white-space:nowrap;">Príj<u>m</u>ový pokladničný doklad -&gt;</div>
<div id="t130" style="position:absolute;left:385.5px;top:300px;font-size:15px;line-height:17px;-webkit-text-stroke:0px #111;color:#111;white-space:nowrap;"><u>V</u>ydané faktúry -&gt;</div>
<div id="t131" style="position:absolute;left:385.5px;top:325px;font-size:15px;line-height:17px;-webkit-text-stroke:0px #111;color:#111;white-space:nowrap;">Vý<u>d</u>ajky -&gt;</div>
<div id="t132" style="position:absolute;left:385.5px;top:360px;font-size:15px;line-height:17px;-webkit-text-stroke:0px #111;color:#111;white-space:nowrap;">Vložiť úlohu</div>
<div id="t133" style="position:absolute;right:745px;top:250px;font-size:15px;line-height:17px;-webkit-text-stroke:0px #111;color:#111;white-space:nowrap;">Ctrl+O</div>
<div id="t134" style="position:absolute;right:745px;top:325px;font-size:15px;line-height:17px;-webkit-text-stroke:0px #111;color:#111;white-space:nowrap;">Ctrl+Alt+D</div>
<div style="position:absolute;left:0px;top:38px;width:1px;height:783px;background:#b0b3b8;"></div>
<div style="position:absolute;left:1348px;top:38px;width:1px;height:783px;background:#b0b3b8;"></div>
<div style="position:absolute;left:0px;top:820px;width:1349px;height:1px;background:#b0b3b8;"></div>
<svg style="position:absolute;left:0;top:811px" width="10" height="10" viewBox="0 0 10 10"><path d="M0 10H9A9 9 0 0 1 0 1Z" fill="#c4c4c4"/><path d="M0.5 0.5A9 9 0 0 0 9.5 9.5" stroke="#a8a8a8" stroke-width="1" fill="none"/></svg>
<svg style="position:absolute;left:1339px;top:811px" width="10" height="10" viewBox="0 0 10 10"><path d="M10 10H1A9 9 0 0 0 10 1Z" fill="#c4c4c4"/><path d="M0.5 9.5A9 9 0 0 0 9.5 0.5" stroke="#a8a8a8" stroke-width="1" fill="none"/></svg>
</body></html>
